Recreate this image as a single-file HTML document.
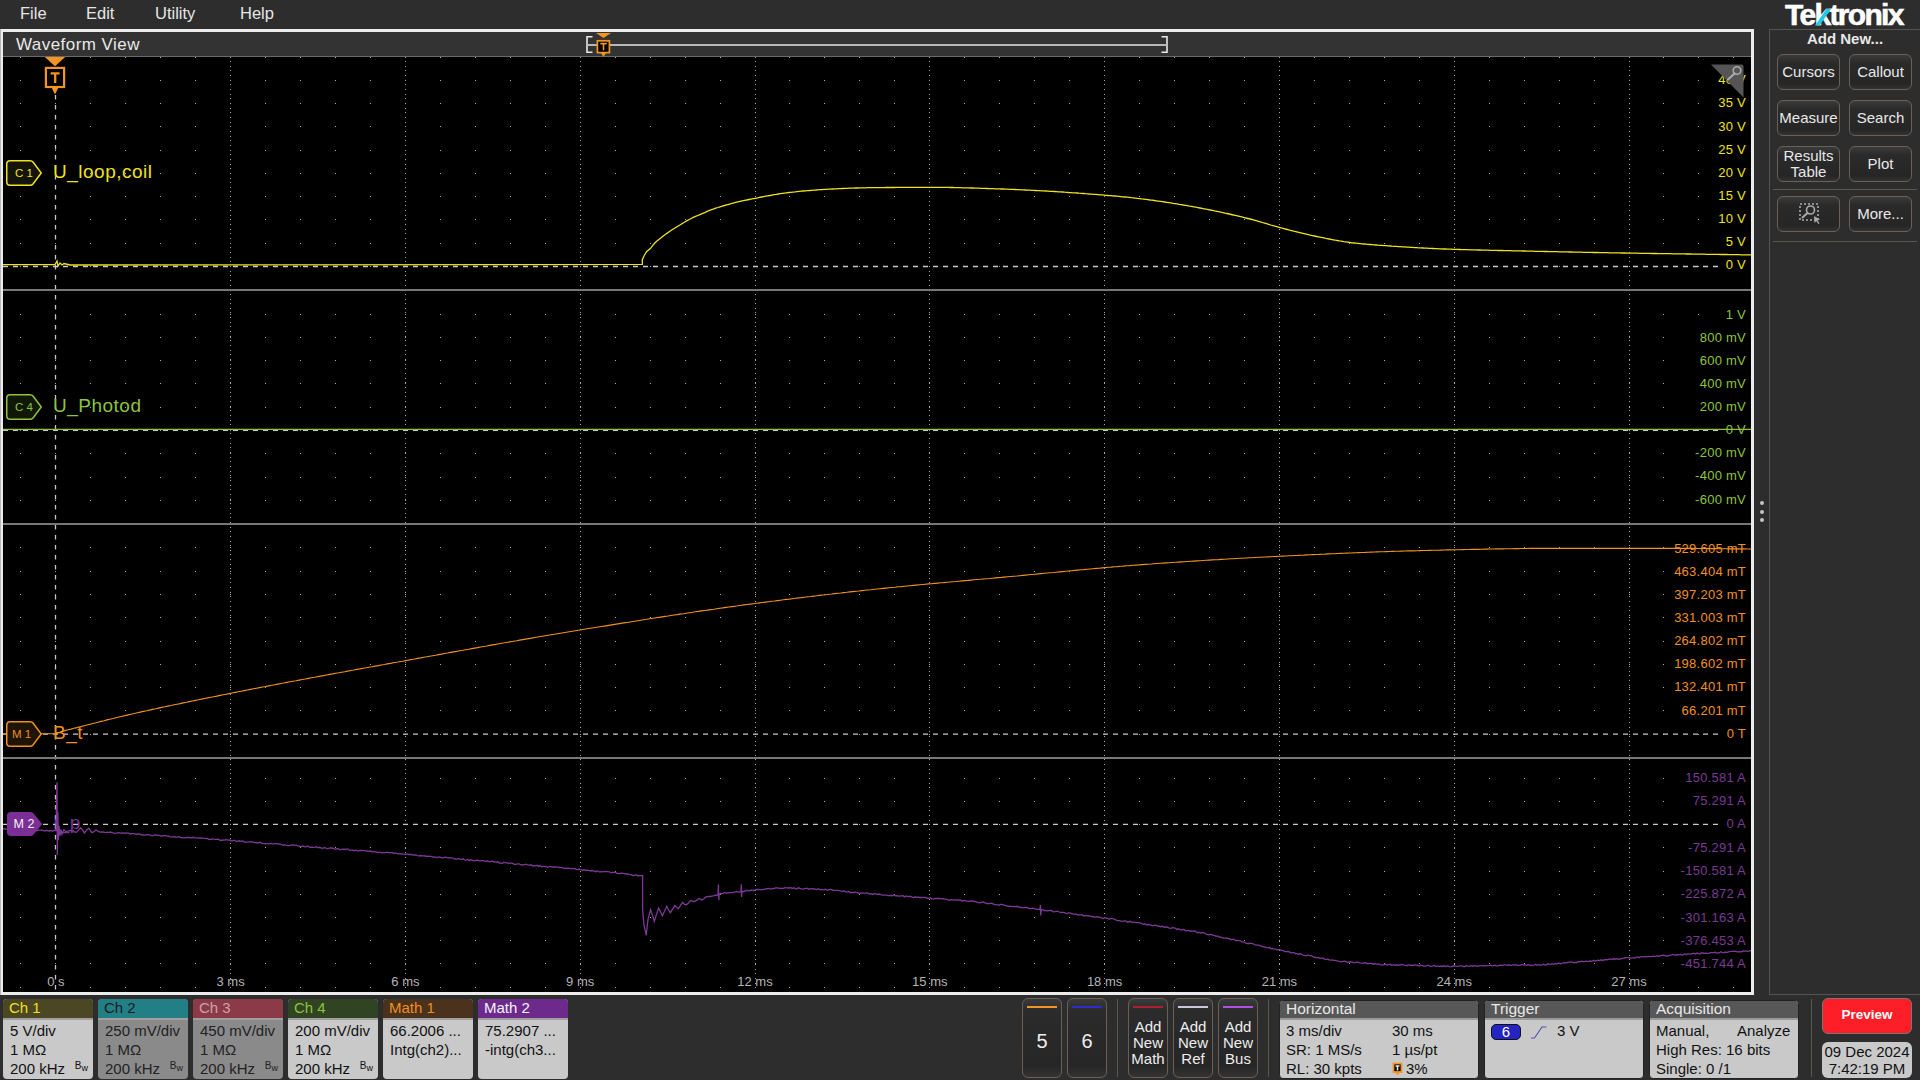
<!DOCTYPE html>
<html><head><meta charset="utf-8">
<style>
*{margin:0;padding:0;box-sizing:border-box}
html,body{width:1920px;height:1080px;overflow:hidden;background:#2d2d2d;font-family:"Liberation Sans", sans-serif;}
.abs{position:absolute}
.menu{position:absolute;top:4px;font-size:16.5px;color:#e6e6e6}
#frame{position:absolute;left:0;top:29px;width:1754px;height:966px;background:#ececec;border-left:1px solid #b8b8b8}
#title{position:absolute;left:3px;top:32px;width:1748px;height:25px;background:#333;border-bottom:1px solid #6a6a6a}
#plot{position:absolute;left:3px;top:57px;width:1748px;height:935px;background:#000;overflow:hidden}
svg{position:absolute;left:0;top:0}
.vl{position:absolute;right:5px;text-align:right;font-size:13px;letter-spacing:0.25px;line-height:16px;white-space:nowrap;background:#000;padding-left:4px}
.tl{position:absolute;top:917px;width:80px;text-align:center;font-size:13px;color:#b4b4b4;line-height:16px}
.btn{position:absolute;width:63px;height:36px;border:1px solid #6a6058;border-radius:6px;background:linear-gradient(#3a3a3a,#2a2a2a 25%,#262626 85%,#333);color:#e8e8e8;font-size:15px;text-align:center;display:flex;align-items:center;justify-content:center;line-height:16px}
.cbox{position:absolute;top:999px;width:90px;height:80px;border-radius:4px;overflow:hidden;background:#c9c9c9}
.cbox .h{height:21px;font-size:15px;line-height:18px;padding-left:6px;border-bottom:2px solid #a0a0a0}
.cbox .b{font-size:15px;line-height:19.2px;padding-left:7px;color:#111;padding-top:1px}
.bw{position:absolute;right:5px;bottom:6px;font-size:10px;color:#111;line-height:10px}
.vbtn{position:absolute;top:998px;width:40px;height:80px;border:1px solid #6a6058;border-radius:6px;background:linear-gradient(#3a3a3a,#2b2b2b 15%,#262626 85%,#333);color:#eee;text-align:center}
.vbtn .bar{position:absolute;left:4px;right:4px;top:7px;height:2px}
.sbox{position:absolute;top:1000px;height:79px;border-radius:4px;overflow:hidden;background:#c9c9c9;border:1px solid #222}
.sbox .h{height:19px;background:#575757;color:#e8e8e8;font-size:15.5px;line-height:15px;padding-left:6px;border-bottom:2px solid #9a9a9a}
.sbox .r{position:absolute;font-size:15px;color:#111;line-height:19px;white-space:nowrap}
</style></head><body>
<div class="menu" style="left:20px">File</div>
<div class="menu" style="left:86px">Edit</div>
<div class="menu" style="left:155px">Utility</div>
<div class="menu" style="left:240px">Help</div>

<div id="frame"></div>
<div id="title"><div class="abs" style="left:13px;top:3px;font-size:17px;letter-spacing:0.45px;color:#e8e8e8;line-height:20px">Waveform View</div></div>
<svg width="1920" height="80" style="left:0;top:0">
 <path d="M592.5 36.8H587V52.2H592.5" stroke="#e8e8e8" stroke-width="1.6" fill="none"/>
 <path d="M1161.5 36.8H1167V52.2H1161.5" stroke="#e8e8e8" stroke-width="1.6" fill="none"/>
 <rect x="587" y="44" width="580" height="2" fill="#b8b8b8"/>
 <path d="M596 33h15l-7.5 5z" fill="#f39423"/>
 <rect x="597.4" y="40.8" width="12" height="11.8" fill="#000" stroke="#f39423" stroke-width="1.7"/>
 <path d="M600.5 52.5l3 4.2l3-4.2z" fill="#f39423"/>
 <path d="M600.3 43.6h6.4M603.5 43.6v6.6" stroke="#f39423" stroke-width="1.6"/>
</svg>
<div id="plot">
<svg width="1748" height="935" viewBox="3 57 1748 935">
<path d="M20 57h1v1h-1zM55 57h1v1h-1zM90 57h1v1h-1zM125 57h1v1h-1zM160 57h1v1h-1zM195 57h1v1h-1zM230 57h1v1h-1zM265 57h1v1h-1zM300 57h1v1h-1zM335 57h1v1h-1zM370 57h1v1h-1zM405 57h1v1h-1zM440 57h1v1h-1zM475 57h1v1h-1zM510 57h1v1h-1zM545 57h1v1h-1zM580 57h1v1h-1zM615 57h1v1h-1zM650 57h1v1h-1zM685 57h1v1h-1zM720 57h1v1h-1zM755 57h1v1h-1zM789 57h1v1h-1zM824 57h1v1h-1zM859 57h1v1h-1zM894 57h1v1h-1zM929 57h1v1h-1zM964 57h1v1h-1zM999 57h1v1h-1zM1034 57h1v1h-1zM1069 57h1v1h-1zM1104 57h1v1h-1zM1139 57h1v1h-1zM1174 57h1v1h-1zM1209 57h1v1h-1zM1244 57h1v1h-1zM1279 57h1v1h-1zM1314 57h1v1h-1zM1349 57h1v1h-1zM1384 57h1v1h-1zM1419 57h1v1h-1zM1454 57h1v1h-1zM1489 57h1v1h-1zM1524 57h1v1h-1zM1559 57h1v1h-1zM1594 57h1v1h-1zM1629 57h1v1h-1zM1663 57h1v1h-1zM1698 57h1v1h-1zM1733 57h1v1h-1zM20 80h1v1h-1zM55 80h1v1h-1zM90 80h1v1h-1zM125 80h1v1h-1zM160 80h1v1h-1zM195 80h1v1h-1zM230 80h1v1h-1zM265 80h1v1h-1zM300 80h1v1h-1zM335 80h1v1h-1zM370 80h1v1h-1zM405 80h1v1h-1zM440 80h1v1h-1zM475 80h1v1h-1zM510 80h1v1h-1zM545 80h1v1h-1zM580 80h1v1h-1zM615 80h1v1h-1zM650 80h1v1h-1zM685 80h1v1h-1zM720 80h1v1h-1zM755 80h1v1h-1zM789 80h1v1h-1zM824 80h1v1h-1zM859 80h1v1h-1zM894 80h1v1h-1zM929 80h1v1h-1zM964 80h1v1h-1zM999 80h1v1h-1zM1034 80h1v1h-1zM1069 80h1v1h-1zM1104 80h1v1h-1zM1139 80h1v1h-1zM1174 80h1v1h-1zM1209 80h1v1h-1zM1244 80h1v1h-1zM1279 80h1v1h-1zM1314 80h1v1h-1zM1349 80h1v1h-1zM1384 80h1v1h-1zM1419 80h1v1h-1zM1454 80h1v1h-1zM1489 80h1v1h-1zM1524 80h1v1h-1zM1559 80h1v1h-1zM1594 80h1v1h-1zM1629 80h1v1h-1zM1663 80h1v1h-1zM1698 80h1v1h-1zM1733 80h1v1h-1zM20 103h1v1h-1zM55 103h1v1h-1zM90 103h1v1h-1zM125 103h1v1h-1zM160 103h1v1h-1zM195 103h1v1h-1zM230 103h1v1h-1zM265 103h1v1h-1zM300 103h1v1h-1zM335 103h1v1h-1zM370 103h1v1h-1zM405 103h1v1h-1zM440 103h1v1h-1zM475 103h1v1h-1zM510 103h1v1h-1zM545 103h1v1h-1zM580 103h1v1h-1zM615 103h1v1h-1zM650 103h1v1h-1zM685 103h1v1h-1zM720 103h1v1h-1zM755 103h1v1h-1zM789 103h1v1h-1zM824 103h1v1h-1zM859 103h1v1h-1zM894 103h1v1h-1zM929 103h1v1h-1zM964 103h1v1h-1zM999 103h1v1h-1zM1034 103h1v1h-1zM1069 103h1v1h-1zM1104 103h1v1h-1zM1139 103h1v1h-1zM1174 103h1v1h-1zM1209 103h1v1h-1zM1244 103h1v1h-1zM1279 103h1v1h-1zM1314 103h1v1h-1zM1349 103h1v1h-1zM1384 103h1v1h-1zM1419 103h1v1h-1zM1454 103h1v1h-1zM1489 103h1v1h-1zM1524 103h1v1h-1zM1559 103h1v1h-1zM1594 103h1v1h-1zM1629 103h1v1h-1zM1663 103h1v1h-1zM1698 103h1v1h-1zM1733 103h1v1h-1zM20 126h1v1h-1zM55 126h1v1h-1zM90 126h1v1h-1zM125 126h1v1h-1zM160 126h1v1h-1zM195 126h1v1h-1zM230 126h1v1h-1zM265 126h1v1h-1zM300 126h1v1h-1zM335 126h1v1h-1zM370 126h1v1h-1zM405 126h1v1h-1zM440 126h1v1h-1zM475 126h1v1h-1zM510 126h1v1h-1zM545 126h1v1h-1zM580 126h1v1h-1zM615 126h1v1h-1zM650 126h1v1h-1zM685 126h1v1h-1zM720 126h1v1h-1zM755 126h1v1h-1zM789 126h1v1h-1zM824 126h1v1h-1zM859 126h1v1h-1zM894 126h1v1h-1zM929 126h1v1h-1zM964 126h1v1h-1zM999 126h1v1h-1zM1034 126h1v1h-1zM1069 126h1v1h-1zM1104 126h1v1h-1zM1139 126h1v1h-1zM1174 126h1v1h-1zM1209 126h1v1h-1zM1244 126h1v1h-1zM1279 126h1v1h-1zM1314 126h1v1h-1zM1349 126h1v1h-1zM1384 126h1v1h-1zM1419 126h1v1h-1zM1454 126h1v1h-1zM1489 126h1v1h-1zM1524 126h1v1h-1zM1559 126h1v1h-1zM1594 126h1v1h-1zM1629 126h1v1h-1zM1663 126h1v1h-1zM1698 126h1v1h-1zM1733 126h1v1h-1zM20 150h1v1h-1zM55 150h1v1h-1zM90 150h1v1h-1zM125 150h1v1h-1zM160 150h1v1h-1zM195 150h1v1h-1zM230 150h1v1h-1zM265 150h1v1h-1zM300 150h1v1h-1zM335 150h1v1h-1zM370 150h1v1h-1zM405 150h1v1h-1zM440 150h1v1h-1zM475 150h1v1h-1zM510 150h1v1h-1zM545 150h1v1h-1zM580 150h1v1h-1zM615 150h1v1h-1zM650 150h1v1h-1zM685 150h1v1h-1zM720 150h1v1h-1zM755 150h1v1h-1zM789 150h1v1h-1zM824 150h1v1h-1zM859 150h1v1h-1zM894 150h1v1h-1zM929 150h1v1h-1zM964 150h1v1h-1zM999 150h1v1h-1zM1034 150h1v1h-1zM1069 150h1v1h-1zM1104 150h1v1h-1zM1139 150h1v1h-1zM1174 150h1v1h-1zM1209 150h1v1h-1zM1244 150h1v1h-1zM1279 150h1v1h-1zM1314 150h1v1h-1zM1349 150h1v1h-1zM1384 150h1v1h-1zM1419 150h1v1h-1zM1454 150h1v1h-1zM1489 150h1v1h-1zM1524 150h1v1h-1zM1559 150h1v1h-1zM1594 150h1v1h-1zM1629 150h1v1h-1zM1663 150h1v1h-1zM1698 150h1v1h-1zM1733 150h1v1h-1zM20 173h1v1h-1zM55 173h1v1h-1zM90 173h1v1h-1zM125 173h1v1h-1zM160 173h1v1h-1zM195 173h1v1h-1zM230 173h1v1h-1zM265 173h1v1h-1zM300 173h1v1h-1zM335 173h1v1h-1zM370 173h1v1h-1zM405 173h1v1h-1zM440 173h1v1h-1zM475 173h1v1h-1zM510 173h1v1h-1zM545 173h1v1h-1zM580 173h1v1h-1zM615 173h1v1h-1zM650 173h1v1h-1zM685 173h1v1h-1zM720 173h1v1h-1zM755 173h1v1h-1zM789 173h1v1h-1zM824 173h1v1h-1zM859 173h1v1h-1zM894 173h1v1h-1zM929 173h1v1h-1zM964 173h1v1h-1zM999 173h1v1h-1zM1034 173h1v1h-1zM1069 173h1v1h-1zM1104 173h1v1h-1zM1139 173h1v1h-1zM1174 173h1v1h-1zM1209 173h1v1h-1zM1244 173h1v1h-1zM1279 173h1v1h-1zM1314 173h1v1h-1zM1349 173h1v1h-1zM1384 173h1v1h-1zM1419 173h1v1h-1zM1454 173h1v1h-1zM1489 173h1v1h-1zM1524 173h1v1h-1zM1559 173h1v1h-1zM1594 173h1v1h-1zM1629 173h1v1h-1zM1663 173h1v1h-1zM1698 173h1v1h-1zM1733 173h1v1h-1zM20 196h1v1h-1zM55 196h1v1h-1zM90 196h1v1h-1zM125 196h1v1h-1zM160 196h1v1h-1zM195 196h1v1h-1zM230 196h1v1h-1zM265 196h1v1h-1zM300 196h1v1h-1zM335 196h1v1h-1zM370 196h1v1h-1zM405 196h1v1h-1zM440 196h1v1h-1zM475 196h1v1h-1zM510 196h1v1h-1zM545 196h1v1h-1zM580 196h1v1h-1zM615 196h1v1h-1zM650 196h1v1h-1zM685 196h1v1h-1zM720 196h1v1h-1zM755 196h1v1h-1zM789 196h1v1h-1zM824 196h1v1h-1zM859 196h1v1h-1zM894 196h1v1h-1zM929 196h1v1h-1zM964 196h1v1h-1zM999 196h1v1h-1zM1034 196h1v1h-1zM1069 196h1v1h-1zM1104 196h1v1h-1zM1139 196h1v1h-1zM1174 196h1v1h-1zM1209 196h1v1h-1zM1244 196h1v1h-1zM1279 196h1v1h-1zM1314 196h1v1h-1zM1349 196h1v1h-1zM1384 196h1v1h-1zM1419 196h1v1h-1zM1454 196h1v1h-1zM1489 196h1v1h-1zM1524 196h1v1h-1zM1559 196h1v1h-1zM1594 196h1v1h-1zM1629 196h1v1h-1zM1663 196h1v1h-1zM1698 196h1v1h-1zM1733 196h1v1h-1zM20 219h1v1h-1zM55 219h1v1h-1zM90 219h1v1h-1zM125 219h1v1h-1zM160 219h1v1h-1zM195 219h1v1h-1zM230 219h1v1h-1zM265 219h1v1h-1zM300 219h1v1h-1zM335 219h1v1h-1zM370 219h1v1h-1zM405 219h1v1h-1zM440 219h1v1h-1zM475 219h1v1h-1zM510 219h1v1h-1zM545 219h1v1h-1zM580 219h1v1h-1zM615 219h1v1h-1zM650 219h1v1h-1zM685 219h1v1h-1zM720 219h1v1h-1zM755 219h1v1h-1zM789 219h1v1h-1zM824 219h1v1h-1zM859 219h1v1h-1zM894 219h1v1h-1zM929 219h1v1h-1zM964 219h1v1h-1zM999 219h1v1h-1zM1034 219h1v1h-1zM1069 219h1v1h-1zM1104 219h1v1h-1zM1139 219h1v1h-1zM1174 219h1v1h-1zM1209 219h1v1h-1zM1244 219h1v1h-1zM1279 219h1v1h-1zM1314 219h1v1h-1zM1349 219h1v1h-1zM1384 219h1v1h-1zM1419 219h1v1h-1zM1454 219h1v1h-1zM1489 219h1v1h-1zM1524 219h1v1h-1zM1559 219h1v1h-1zM1594 219h1v1h-1zM1629 219h1v1h-1zM1663 219h1v1h-1zM1698 219h1v1h-1zM1733 219h1v1h-1zM20 243h1v1h-1zM55 243h1v1h-1zM90 243h1v1h-1zM125 243h1v1h-1zM160 243h1v1h-1zM195 243h1v1h-1zM230 243h1v1h-1zM265 243h1v1h-1zM300 243h1v1h-1zM335 243h1v1h-1zM370 243h1v1h-1zM405 243h1v1h-1zM440 243h1v1h-1zM475 243h1v1h-1zM510 243h1v1h-1zM545 243h1v1h-1zM580 243h1v1h-1zM615 243h1v1h-1zM650 243h1v1h-1zM685 243h1v1h-1zM720 243h1v1h-1zM755 243h1v1h-1zM789 243h1v1h-1zM824 243h1v1h-1zM859 243h1v1h-1zM894 243h1v1h-1zM929 243h1v1h-1zM964 243h1v1h-1zM999 243h1v1h-1zM1034 243h1v1h-1zM1069 243h1v1h-1zM1104 243h1v1h-1zM1139 243h1v1h-1zM1174 243h1v1h-1zM1209 243h1v1h-1zM1244 243h1v1h-1zM1279 243h1v1h-1zM1314 243h1v1h-1zM1349 243h1v1h-1zM1384 243h1v1h-1zM1419 243h1v1h-1zM1454 243h1v1h-1zM1489 243h1v1h-1zM1524 243h1v1h-1zM1559 243h1v1h-1zM1594 243h1v1h-1zM1629 243h1v1h-1zM1663 243h1v1h-1zM1698 243h1v1h-1zM1733 243h1v1h-1zM20 266h1v1h-1zM55 266h1v1h-1zM90 266h1v1h-1zM125 266h1v1h-1zM160 266h1v1h-1zM195 266h1v1h-1zM230 266h1v1h-1zM265 266h1v1h-1zM300 266h1v1h-1zM335 266h1v1h-1zM370 266h1v1h-1zM405 266h1v1h-1zM440 266h1v1h-1zM475 266h1v1h-1zM510 266h1v1h-1zM545 266h1v1h-1zM580 266h1v1h-1zM615 266h1v1h-1zM650 266h1v1h-1zM685 266h1v1h-1zM720 266h1v1h-1zM755 266h1v1h-1zM789 266h1v1h-1zM824 266h1v1h-1zM859 266h1v1h-1zM894 266h1v1h-1zM929 266h1v1h-1zM964 266h1v1h-1zM999 266h1v1h-1zM1034 266h1v1h-1zM1069 266h1v1h-1zM1104 266h1v1h-1zM1139 266h1v1h-1zM1174 266h1v1h-1zM1209 266h1v1h-1zM1244 266h1v1h-1zM1279 266h1v1h-1zM1314 266h1v1h-1zM1349 266h1v1h-1zM1384 266h1v1h-1zM1419 266h1v1h-1zM1454 266h1v1h-1zM1489 266h1v1h-1zM1524 266h1v1h-1zM1559 266h1v1h-1zM1594 266h1v1h-1zM1629 266h1v1h-1zM1663 266h1v1h-1zM1698 266h1v1h-1zM1733 266h1v1h-1zM20 290h1v1h-1zM55 290h1v1h-1zM90 290h1v1h-1zM125 290h1v1h-1zM160 290h1v1h-1zM195 290h1v1h-1zM230 290h1v1h-1zM265 290h1v1h-1zM300 290h1v1h-1zM335 290h1v1h-1zM370 290h1v1h-1zM405 290h1v1h-1zM440 290h1v1h-1zM475 290h1v1h-1zM510 290h1v1h-1zM545 290h1v1h-1zM580 290h1v1h-1zM615 290h1v1h-1zM650 290h1v1h-1zM685 290h1v1h-1zM720 290h1v1h-1zM755 290h1v1h-1zM789 290h1v1h-1zM824 290h1v1h-1zM859 290h1v1h-1zM894 290h1v1h-1zM929 290h1v1h-1zM964 290h1v1h-1zM999 290h1v1h-1zM1034 290h1v1h-1zM1069 290h1v1h-1zM1104 290h1v1h-1zM1139 290h1v1h-1zM1174 290h1v1h-1zM1209 290h1v1h-1zM1244 290h1v1h-1zM1279 290h1v1h-1zM1314 290h1v1h-1zM1349 290h1v1h-1zM1384 290h1v1h-1zM1419 290h1v1h-1zM1454 290h1v1h-1zM1489 290h1v1h-1zM1524 290h1v1h-1zM1559 290h1v1h-1zM1594 290h1v1h-1zM1629 290h1v1h-1zM1663 290h1v1h-1zM1698 290h1v1h-1zM1733 290h1v1h-1zM20 314h1v1h-1zM55 314h1v1h-1zM90 314h1v1h-1zM125 314h1v1h-1zM160 314h1v1h-1zM195 314h1v1h-1zM230 314h1v1h-1zM265 314h1v1h-1zM300 314h1v1h-1zM335 314h1v1h-1zM370 314h1v1h-1zM405 314h1v1h-1zM440 314h1v1h-1zM475 314h1v1h-1zM510 314h1v1h-1zM545 314h1v1h-1zM580 314h1v1h-1zM615 314h1v1h-1zM650 314h1v1h-1zM685 314h1v1h-1zM720 314h1v1h-1zM755 314h1v1h-1zM789 314h1v1h-1zM824 314h1v1h-1zM859 314h1v1h-1zM894 314h1v1h-1zM929 314h1v1h-1zM964 314h1v1h-1zM999 314h1v1h-1zM1034 314h1v1h-1zM1069 314h1v1h-1zM1104 314h1v1h-1zM1139 314h1v1h-1zM1174 314h1v1h-1zM1209 314h1v1h-1zM1244 314h1v1h-1zM1279 314h1v1h-1zM1314 314h1v1h-1zM1349 314h1v1h-1zM1384 314h1v1h-1zM1419 314h1v1h-1zM1454 314h1v1h-1zM1489 314h1v1h-1zM1524 314h1v1h-1zM1559 314h1v1h-1zM1594 314h1v1h-1zM1629 314h1v1h-1zM1663 314h1v1h-1zM1698 314h1v1h-1zM1733 314h1v1h-1zM20 337h1v1h-1zM55 337h1v1h-1zM90 337h1v1h-1zM125 337h1v1h-1zM160 337h1v1h-1zM195 337h1v1h-1zM230 337h1v1h-1zM265 337h1v1h-1zM300 337h1v1h-1zM335 337h1v1h-1zM370 337h1v1h-1zM405 337h1v1h-1zM440 337h1v1h-1zM475 337h1v1h-1zM510 337h1v1h-1zM545 337h1v1h-1zM580 337h1v1h-1zM615 337h1v1h-1zM650 337h1v1h-1zM685 337h1v1h-1zM720 337h1v1h-1zM755 337h1v1h-1zM789 337h1v1h-1zM824 337h1v1h-1zM859 337h1v1h-1zM894 337h1v1h-1zM929 337h1v1h-1zM964 337h1v1h-1zM999 337h1v1h-1zM1034 337h1v1h-1zM1069 337h1v1h-1zM1104 337h1v1h-1zM1139 337h1v1h-1zM1174 337h1v1h-1zM1209 337h1v1h-1zM1244 337h1v1h-1zM1279 337h1v1h-1zM1314 337h1v1h-1zM1349 337h1v1h-1zM1384 337h1v1h-1zM1419 337h1v1h-1zM1454 337h1v1h-1zM1489 337h1v1h-1zM1524 337h1v1h-1zM1559 337h1v1h-1zM1594 337h1v1h-1zM1629 337h1v1h-1zM1663 337h1v1h-1zM1698 337h1v1h-1zM1733 337h1v1h-1zM20 360h1v1h-1zM55 360h1v1h-1zM90 360h1v1h-1zM125 360h1v1h-1zM160 360h1v1h-1zM195 360h1v1h-1zM230 360h1v1h-1zM265 360h1v1h-1zM300 360h1v1h-1zM335 360h1v1h-1zM370 360h1v1h-1zM405 360h1v1h-1zM440 360h1v1h-1zM475 360h1v1h-1zM510 360h1v1h-1zM545 360h1v1h-1zM580 360h1v1h-1zM615 360h1v1h-1zM650 360h1v1h-1zM685 360h1v1h-1zM720 360h1v1h-1zM755 360h1v1h-1zM789 360h1v1h-1zM824 360h1v1h-1zM859 360h1v1h-1zM894 360h1v1h-1zM929 360h1v1h-1zM964 360h1v1h-1zM999 360h1v1h-1zM1034 360h1v1h-1zM1069 360h1v1h-1zM1104 360h1v1h-1zM1139 360h1v1h-1zM1174 360h1v1h-1zM1209 360h1v1h-1zM1244 360h1v1h-1zM1279 360h1v1h-1zM1314 360h1v1h-1zM1349 360h1v1h-1zM1384 360h1v1h-1zM1419 360h1v1h-1zM1454 360h1v1h-1zM1489 360h1v1h-1zM1524 360h1v1h-1zM1559 360h1v1h-1zM1594 360h1v1h-1zM1629 360h1v1h-1zM1663 360h1v1h-1zM1698 360h1v1h-1zM1733 360h1v1h-1zM20 383h1v1h-1zM55 383h1v1h-1zM90 383h1v1h-1zM125 383h1v1h-1zM160 383h1v1h-1zM195 383h1v1h-1zM230 383h1v1h-1zM265 383h1v1h-1zM300 383h1v1h-1zM335 383h1v1h-1zM370 383h1v1h-1zM405 383h1v1h-1zM440 383h1v1h-1zM475 383h1v1h-1zM510 383h1v1h-1zM545 383h1v1h-1zM580 383h1v1h-1zM615 383h1v1h-1zM650 383h1v1h-1zM685 383h1v1h-1zM720 383h1v1h-1zM755 383h1v1h-1zM789 383h1v1h-1zM824 383h1v1h-1zM859 383h1v1h-1zM894 383h1v1h-1zM929 383h1v1h-1zM964 383h1v1h-1zM999 383h1v1h-1zM1034 383h1v1h-1zM1069 383h1v1h-1zM1104 383h1v1h-1zM1139 383h1v1h-1zM1174 383h1v1h-1zM1209 383h1v1h-1zM1244 383h1v1h-1zM1279 383h1v1h-1zM1314 383h1v1h-1zM1349 383h1v1h-1zM1384 383h1v1h-1zM1419 383h1v1h-1zM1454 383h1v1h-1zM1489 383h1v1h-1zM1524 383h1v1h-1zM1559 383h1v1h-1zM1594 383h1v1h-1zM1629 383h1v1h-1zM1663 383h1v1h-1zM1698 383h1v1h-1zM1733 383h1v1h-1zM20 407h1v1h-1zM55 407h1v1h-1zM90 407h1v1h-1zM125 407h1v1h-1zM160 407h1v1h-1zM195 407h1v1h-1zM230 407h1v1h-1zM265 407h1v1h-1zM300 407h1v1h-1zM335 407h1v1h-1zM370 407h1v1h-1zM405 407h1v1h-1zM440 407h1v1h-1zM475 407h1v1h-1zM510 407h1v1h-1zM545 407h1v1h-1zM580 407h1v1h-1zM615 407h1v1h-1zM650 407h1v1h-1zM685 407h1v1h-1zM720 407h1v1h-1zM755 407h1v1h-1zM789 407h1v1h-1zM824 407h1v1h-1zM859 407h1v1h-1zM894 407h1v1h-1zM929 407h1v1h-1zM964 407h1v1h-1zM999 407h1v1h-1zM1034 407h1v1h-1zM1069 407h1v1h-1zM1104 407h1v1h-1zM1139 407h1v1h-1zM1174 407h1v1h-1zM1209 407h1v1h-1zM1244 407h1v1h-1zM1279 407h1v1h-1zM1314 407h1v1h-1zM1349 407h1v1h-1zM1384 407h1v1h-1zM1419 407h1v1h-1zM1454 407h1v1h-1zM1489 407h1v1h-1zM1524 407h1v1h-1zM1559 407h1v1h-1zM1594 407h1v1h-1zM1629 407h1v1h-1zM1663 407h1v1h-1zM1698 407h1v1h-1zM1733 407h1v1h-1zM20 430h1v1h-1zM55 430h1v1h-1zM90 430h1v1h-1zM125 430h1v1h-1zM160 430h1v1h-1zM195 430h1v1h-1zM230 430h1v1h-1zM265 430h1v1h-1zM300 430h1v1h-1zM335 430h1v1h-1zM370 430h1v1h-1zM405 430h1v1h-1zM440 430h1v1h-1zM475 430h1v1h-1zM510 430h1v1h-1zM545 430h1v1h-1zM580 430h1v1h-1zM615 430h1v1h-1zM650 430h1v1h-1zM685 430h1v1h-1zM720 430h1v1h-1zM755 430h1v1h-1zM789 430h1v1h-1zM824 430h1v1h-1zM859 430h1v1h-1zM894 430h1v1h-1zM929 430h1v1h-1zM964 430h1v1h-1zM999 430h1v1h-1zM1034 430h1v1h-1zM1069 430h1v1h-1zM1104 430h1v1h-1zM1139 430h1v1h-1zM1174 430h1v1h-1zM1209 430h1v1h-1zM1244 430h1v1h-1zM1279 430h1v1h-1zM1314 430h1v1h-1zM1349 430h1v1h-1zM1384 430h1v1h-1zM1419 430h1v1h-1zM1454 430h1v1h-1zM1489 430h1v1h-1zM1524 430h1v1h-1zM1559 430h1v1h-1zM1594 430h1v1h-1zM1629 430h1v1h-1zM1663 430h1v1h-1zM1698 430h1v1h-1zM1733 430h1v1h-1zM20 453h1v1h-1zM55 453h1v1h-1zM90 453h1v1h-1zM125 453h1v1h-1zM160 453h1v1h-1zM195 453h1v1h-1zM230 453h1v1h-1zM265 453h1v1h-1zM300 453h1v1h-1zM335 453h1v1h-1zM370 453h1v1h-1zM405 453h1v1h-1zM440 453h1v1h-1zM475 453h1v1h-1zM510 453h1v1h-1zM545 453h1v1h-1zM580 453h1v1h-1zM615 453h1v1h-1zM650 453h1v1h-1zM685 453h1v1h-1zM720 453h1v1h-1zM755 453h1v1h-1zM789 453h1v1h-1zM824 453h1v1h-1zM859 453h1v1h-1zM894 453h1v1h-1zM929 453h1v1h-1zM964 453h1v1h-1zM999 453h1v1h-1zM1034 453h1v1h-1zM1069 453h1v1h-1zM1104 453h1v1h-1zM1139 453h1v1h-1zM1174 453h1v1h-1zM1209 453h1v1h-1zM1244 453h1v1h-1zM1279 453h1v1h-1zM1314 453h1v1h-1zM1349 453h1v1h-1zM1384 453h1v1h-1zM1419 453h1v1h-1zM1454 453h1v1h-1zM1489 453h1v1h-1zM1524 453h1v1h-1zM1559 453h1v1h-1zM1594 453h1v1h-1zM1629 453h1v1h-1zM1663 453h1v1h-1zM1698 453h1v1h-1zM1733 453h1v1h-1zM20 477h1v1h-1zM55 477h1v1h-1zM90 477h1v1h-1zM125 477h1v1h-1zM160 477h1v1h-1zM195 477h1v1h-1zM230 477h1v1h-1zM265 477h1v1h-1zM300 477h1v1h-1zM335 477h1v1h-1zM370 477h1v1h-1zM405 477h1v1h-1zM440 477h1v1h-1zM475 477h1v1h-1zM510 477h1v1h-1zM545 477h1v1h-1zM580 477h1v1h-1zM615 477h1v1h-1zM650 477h1v1h-1zM685 477h1v1h-1zM720 477h1v1h-1zM755 477h1v1h-1zM789 477h1v1h-1zM824 477h1v1h-1zM859 477h1v1h-1zM894 477h1v1h-1zM929 477h1v1h-1zM964 477h1v1h-1zM999 477h1v1h-1zM1034 477h1v1h-1zM1069 477h1v1h-1zM1104 477h1v1h-1zM1139 477h1v1h-1zM1174 477h1v1h-1zM1209 477h1v1h-1zM1244 477h1v1h-1zM1279 477h1v1h-1zM1314 477h1v1h-1zM1349 477h1v1h-1zM1384 477h1v1h-1zM1419 477h1v1h-1zM1454 477h1v1h-1zM1489 477h1v1h-1zM1524 477h1v1h-1zM1559 477h1v1h-1zM1594 477h1v1h-1zM1629 477h1v1h-1zM1663 477h1v1h-1zM1698 477h1v1h-1zM1733 477h1v1h-1zM20 500h1v1h-1zM55 500h1v1h-1zM90 500h1v1h-1zM125 500h1v1h-1zM160 500h1v1h-1zM195 500h1v1h-1zM230 500h1v1h-1zM265 500h1v1h-1zM300 500h1v1h-1zM335 500h1v1h-1zM370 500h1v1h-1zM405 500h1v1h-1zM440 500h1v1h-1zM475 500h1v1h-1zM510 500h1v1h-1zM545 500h1v1h-1zM580 500h1v1h-1zM615 500h1v1h-1zM650 500h1v1h-1zM685 500h1v1h-1zM720 500h1v1h-1zM755 500h1v1h-1zM789 500h1v1h-1zM824 500h1v1h-1zM859 500h1v1h-1zM894 500h1v1h-1zM929 500h1v1h-1zM964 500h1v1h-1zM999 500h1v1h-1zM1034 500h1v1h-1zM1069 500h1v1h-1zM1104 500h1v1h-1zM1139 500h1v1h-1zM1174 500h1v1h-1zM1209 500h1v1h-1zM1244 500h1v1h-1zM1279 500h1v1h-1zM1314 500h1v1h-1zM1349 500h1v1h-1zM1384 500h1v1h-1zM1419 500h1v1h-1zM1454 500h1v1h-1zM1489 500h1v1h-1zM1524 500h1v1h-1zM1559 500h1v1h-1zM1594 500h1v1h-1zM1629 500h1v1h-1zM1663 500h1v1h-1zM1698 500h1v1h-1zM1733 500h1v1h-1zM20 524h1v1h-1zM55 524h1v1h-1zM90 524h1v1h-1zM125 524h1v1h-1zM160 524h1v1h-1zM195 524h1v1h-1zM230 524h1v1h-1zM265 524h1v1h-1zM300 524h1v1h-1zM335 524h1v1h-1zM370 524h1v1h-1zM405 524h1v1h-1zM440 524h1v1h-1zM475 524h1v1h-1zM510 524h1v1h-1zM545 524h1v1h-1zM580 524h1v1h-1zM615 524h1v1h-1zM650 524h1v1h-1zM685 524h1v1h-1zM720 524h1v1h-1zM755 524h1v1h-1zM789 524h1v1h-1zM824 524h1v1h-1zM859 524h1v1h-1zM894 524h1v1h-1zM929 524h1v1h-1zM964 524h1v1h-1zM999 524h1v1h-1zM1034 524h1v1h-1zM1069 524h1v1h-1zM1104 524h1v1h-1zM1139 524h1v1h-1zM1174 524h1v1h-1zM1209 524h1v1h-1zM1244 524h1v1h-1zM1279 524h1v1h-1zM1314 524h1v1h-1zM1349 524h1v1h-1zM1384 524h1v1h-1zM1419 524h1v1h-1zM1454 524h1v1h-1zM1489 524h1v1h-1zM1524 524h1v1h-1zM1559 524h1v1h-1zM1594 524h1v1h-1zM1629 524h1v1h-1zM1663 524h1v1h-1zM1698 524h1v1h-1zM1733 524h1v1h-1zM20 547h1v1h-1zM55 547h1v1h-1zM90 547h1v1h-1zM125 547h1v1h-1zM160 547h1v1h-1zM195 547h1v1h-1zM230 547h1v1h-1zM265 547h1v1h-1zM300 547h1v1h-1zM335 547h1v1h-1zM370 547h1v1h-1zM405 547h1v1h-1zM440 547h1v1h-1zM475 547h1v1h-1zM510 547h1v1h-1zM545 547h1v1h-1zM580 547h1v1h-1zM615 547h1v1h-1zM650 547h1v1h-1zM685 547h1v1h-1zM720 547h1v1h-1zM755 547h1v1h-1zM789 547h1v1h-1zM824 547h1v1h-1zM859 547h1v1h-1zM894 547h1v1h-1zM929 547h1v1h-1zM964 547h1v1h-1zM999 547h1v1h-1zM1034 547h1v1h-1zM1069 547h1v1h-1zM1104 547h1v1h-1zM1139 547h1v1h-1zM1174 547h1v1h-1zM1209 547h1v1h-1zM1244 547h1v1h-1zM1279 547h1v1h-1zM1314 547h1v1h-1zM1349 547h1v1h-1zM1384 547h1v1h-1zM1419 547h1v1h-1zM1454 547h1v1h-1zM1489 547h1v1h-1zM1524 547h1v1h-1zM1559 547h1v1h-1zM1594 547h1v1h-1zM1629 547h1v1h-1zM1663 547h1v1h-1zM1698 547h1v1h-1zM1733 547h1v1h-1zM20 571h1v1h-1zM55 571h1v1h-1zM90 571h1v1h-1zM125 571h1v1h-1zM160 571h1v1h-1zM195 571h1v1h-1zM230 571h1v1h-1zM265 571h1v1h-1zM300 571h1v1h-1zM335 571h1v1h-1zM370 571h1v1h-1zM405 571h1v1h-1zM440 571h1v1h-1zM475 571h1v1h-1zM510 571h1v1h-1zM545 571h1v1h-1zM580 571h1v1h-1zM615 571h1v1h-1zM650 571h1v1h-1zM685 571h1v1h-1zM720 571h1v1h-1zM755 571h1v1h-1zM789 571h1v1h-1zM824 571h1v1h-1zM859 571h1v1h-1zM894 571h1v1h-1zM929 571h1v1h-1zM964 571h1v1h-1zM999 571h1v1h-1zM1034 571h1v1h-1zM1069 571h1v1h-1zM1104 571h1v1h-1zM1139 571h1v1h-1zM1174 571h1v1h-1zM1209 571h1v1h-1zM1244 571h1v1h-1zM1279 571h1v1h-1zM1314 571h1v1h-1zM1349 571h1v1h-1zM1384 571h1v1h-1zM1419 571h1v1h-1zM1454 571h1v1h-1zM1489 571h1v1h-1zM1524 571h1v1h-1zM1559 571h1v1h-1zM1594 571h1v1h-1zM1629 571h1v1h-1zM1663 571h1v1h-1zM1698 571h1v1h-1zM1733 571h1v1h-1zM20 594h1v1h-1zM55 594h1v1h-1zM90 594h1v1h-1zM125 594h1v1h-1zM160 594h1v1h-1zM195 594h1v1h-1zM230 594h1v1h-1zM265 594h1v1h-1zM300 594h1v1h-1zM335 594h1v1h-1zM370 594h1v1h-1zM405 594h1v1h-1zM440 594h1v1h-1zM475 594h1v1h-1zM510 594h1v1h-1zM545 594h1v1h-1zM580 594h1v1h-1zM615 594h1v1h-1zM650 594h1v1h-1zM685 594h1v1h-1zM720 594h1v1h-1zM755 594h1v1h-1zM789 594h1v1h-1zM824 594h1v1h-1zM859 594h1v1h-1zM894 594h1v1h-1zM929 594h1v1h-1zM964 594h1v1h-1zM999 594h1v1h-1zM1034 594h1v1h-1zM1069 594h1v1h-1zM1104 594h1v1h-1zM1139 594h1v1h-1zM1174 594h1v1h-1zM1209 594h1v1h-1zM1244 594h1v1h-1zM1279 594h1v1h-1zM1314 594h1v1h-1zM1349 594h1v1h-1zM1384 594h1v1h-1zM1419 594h1v1h-1zM1454 594h1v1h-1zM1489 594h1v1h-1zM1524 594h1v1h-1zM1559 594h1v1h-1zM1594 594h1v1h-1zM1629 594h1v1h-1zM1663 594h1v1h-1zM1698 594h1v1h-1zM1733 594h1v1h-1zM20 617h1v1h-1zM55 617h1v1h-1zM90 617h1v1h-1zM125 617h1v1h-1zM160 617h1v1h-1zM195 617h1v1h-1zM230 617h1v1h-1zM265 617h1v1h-1zM300 617h1v1h-1zM335 617h1v1h-1zM370 617h1v1h-1zM405 617h1v1h-1zM440 617h1v1h-1zM475 617h1v1h-1zM510 617h1v1h-1zM545 617h1v1h-1zM580 617h1v1h-1zM615 617h1v1h-1zM650 617h1v1h-1zM685 617h1v1h-1zM720 617h1v1h-1zM755 617h1v1h-1zM789 617h1v1h-1zM824 617h1v1h-1zM859 617h1v1h-1zM894 617h1v1h-1zM929 617h1v1h-1zM964 617h1v1h-1zM999 617h1v1h-1zM1034 617h1v1h-1zM1069 617h1v1h-1zM1104 617h1v1h-1zM1139 617h1v1h-1zM1174 617h1v1h-1zM1209 617h1v1h-1zM1244 617h1v1h-1zM1279 617h1v1h-1zM1314 617h1v1h-1zM1349 617h1v1h-1zM1384 617h1v1h-1zM1419 617h1v1h-1zM1454 617h1v1h-1zM1489 617h1v1h-1zM1524 617h1v1h-1zM1559 617h1v1h-1zM1594 617h1v1h-1zM1629 617h1v1h-1zM1663 617h1v1h-1zM1698 617h1v1h-1zM1733 617h1v1h-1zM20 641h1v1h-1zM55 641h1v1h-1zM90 641h1v1h-1zM125 641h1v1h-1zM160 641h1v1h-1zM195 641h1v1h-1zM230 641h1v1h-1zM265 641h1v1h-1zM300 641h1v1h-1zM335 641h1v1h-1zM370 641h1v1h-1zM405 641h1v1h-1zM440 641h1v1h-1zM475 641h1v1h-1zM510 641h1v1h-1zM545 641h1v1h-1zM580 641h1v1h-1zM615 641h1v1h-1zM650 641h1v1h-1zM685 641h1v1h-1zM720 641h1v1h-1zM755 641h1v1h-1zM789 641h1v1h-1zM824 641h1v1h-1zM859 641h1v1h-1zM894 641h1v1h-1zM929 641h1v1h-1zM964 641h1v1h-1zM999 641h1v1h-1zM1034 641h1v1h-1zM1069 641h1v1h-1zM1104 641h1v1h-1zM1139 641h1v1h-1zM1174 641h1v1h-1zM1209 641h1v1h-1zM1244 641h1v1h-1zM1279 641h1v1h-1zM1314 641h1v1h-1zM1349 641h1v1h-1zM1384 641h1v1h-1zM1419 641h1v1h-1zM1454 641h1v1h-1zM1489 641h1v1h-1zM1524 641h1v1h-1zM1559 641h1v1h-1zM1594 641h1v1h-1zM1629 641h1v1h-1zM1663 641h1v1h-1zM1698 641h1v1h-1zM1733 641h1v1h-1zM20 664h1v1h-1zM55 664h1v1h-1zM90 664h1v1h-1zM125 664h1v1h-1zM160 664h1v1h-1zM195 664h1v1h-1zM230 664h1v1h-1zM265 664h1v1h-1zM300 664h1v1h-1zM335 664h1v1h-1zM370 664h1v1h-1zM405 664h1v1h-1zM440 664h1v1h-1zM475 664h1v1h-1zM510 664h1v1h-1zM545 664h1v1h-1zM580 664h1v1h-1zM615 664h1v1h-1zM650 664h1v1h-1zM685 664h1v1h-1zM720 664h1v1h-1zM755 664h1v1h-1zM789 664h1v1h-1zM824 664h1v1h-1zM859 664h1v1h-1zM894 664h1v1h-1zM929 664h1v1h-1zM964 664h1v1h-1zM999 664h1v1h-1zM1034 664h1v1h-1zM1069 664h1v1h-1zM1104 664h1v1h-1zM1139 664h1v1h-1zM1174 664h1v1h-1zM1209 664h1v1h-1zM1244 664h1v1h-1zM1279 664h1v1h-1zM1314 664h1v1h-1zM1349 664h1v1h-1zM1384 664h1v1h-1zM1419 664h1v1h-1zM1454 664h1v1h-1zM1489 664h1v1h-1zM1524 664h1v1h-1zM1559 664h1v1h-1zM1594 664h1v1h-1zM1629 664h1v1h-1zM1663 664h1v1h-1zM1698 664h1v1h-1zM1733 664h1v1h-1zM20 687h1v1h-1zM55 687h1v1h-1zM90 687h1v1h-1zM125 687h1v1h-1zM160 687h1v1h-1zM195 687h1v1h-1zM230 687h1v1h-1zM265 687h1v1h-1zM300 687h1v1h-1zM335 687h1v1h-1zM370 687h1v1h-1zM405 687h1v1h-1zM440 687h1v1h-1zM475 687h1v1h-1zM510 687h1v1h-1zM545 687h1v1h-1zM580 687h1v1h-1zM615 687h1v1h-1zM650 687h1v1h-1zM685 687h1v1h-1zM720 687h1v1h-1zM755 687h1v1h-1zM789 687h1v1h-1zM824 687h1v1h-1zM859 687h1v1h-1zM894 687h1v1h-1zM929 687h1v1h-1zM964 687h1v1h-1zM999 687h1v1h-1zM1034 687h1v1h-1zM1069 687h1v1h-1zM1104 687h1v1h-1zM1139 687h1v1h-1zM1174 687h1v1h-1zM1209 687h1v1h-1zM1244 687h1v1h-1zM1279 687h1v1h-1zM1314 687h1v1h-1zM1349 687h1v1h-1zM1384 687h1v1h-1zM1419 687h1v1h-1zM1454 687h1v1h-1zM1489 687h1v1h-1zM1524 687h1v1h-1zM1559 687h1v1h-1zM1594 687h1v1h-1zM1629 687h1v1h-1zM1663 687h1v1h-1zM1698 687h1v1h-1zM1733 687h1v1h-1zM20 710h1v1h-1zM55 710h1v1h-1zM90 710h1v1h-1zM125 710h1v1h-1zM160 710h1v1h-1zM195 710h1v1h-1zM230 710h1v1h-1zM265 710h1v1h-1zM300 710h1v1h-1zM335 710h1v1h-1zM370 710h1v1h-1zM405 710h1v1h-1zM440 710h1v1h-1zM475 710h1v1h-1zM510 710h1v1h-1zM545 710h1v1h-1zM580 710h1v1h-1zM615 710h1v1h-1zM650 710h1v1h-1zM685 710h1v1h-1zM720 710h1v1h-1zM755 710h1v1h-1zM789 710h1v1h-1zM824 710h1v1h-1zM859 710h1v1h-1zM894 710h1v1h-1zM929 710h1v1h-1zM964 710h1v1h-1zM999 710h1v1h-1zM1034 710h1v1h-1zM1069 710h1v1h-1zM1104 710h1v1h-1zM1139 710h1v1h-1zM1174 710h1v1h-1zM1209 710h1v1h-1zM1244 710h1v1h-1zM1279 710h1v1h-1zM1314 710h1v1h-1zM1349 710h1v1h-1zM1384 710h1v1h-1zM1419 710h1v1h-1zM1454 710h1v1h-1zM1489 710h1v1h-1zM1524 710h1v1h-1zM1559 710h1v1h-1zM1594 710h1v1h-1zM1629 710h1v1h-1zM1663 710h1v1h-1zM1698 710h1v1h-1zM1733 710h1v1h-1zM20 734h1v1h-1zM55 734h1v1h-1zM90 734h1v1h-1zM125 734h1v1h-1zM160 734h1v1h-1zM195 734h1v1h-1zM230 734h1v1h-1zM265 734h1v1h-1zM300 734h1v1h-1zM335 734h1v1h-1zM370 734h1v1h-1zM405 734h1v1h-1zM440 734h1v1h-1zM475 734h1v1h-1zM510 734h1v1h-1zM545 734h1v1h-1zM580 734h1v1h-1zM615 734h1v1h-1zM650 734h1v1h-1zM685 734h1v1h-1zM720 734h1v1h-1zM755 734h1v1h-1zM789 734h1v1h-1zM824 734h1v1h-1zM859 734h1v1h-1zM894 734h1v1h-1zM929 734h1v1h-1zM964 734h1v1h-1zM999 734h1v1h-1zM1034 734h1v1h-1zM1069 734h1v1h-1zM1104 734h1v1h-1zM1139 734h1v1h-1zM1174 734h1v1h-1zM1209 734h1v1h-1zM1244 734h1v1h-1zM1279 734h1v1h-1zM1314 734h1v1h-1zM1349 734h1v1h-1zM1384 734h1v1h-1zM1419 734h1v1h-1zM1454 734h1v1h-1zM1489 734h1v1h-1zM1524 734h1v1h-1zM1559 734h1v1h-1zM1594 734h1v1h-1zM1629 734h1v1h-1zM1663 734h1v1h-1zM1698 734h1v1h-1zM1733 734h1v1h-1zM20 757h1v1h-1zM55 757h1v1h-1zM90 757h1v1h-1zM125 757h1v1h-1zM160 757h1v1h-1zM195 757h1v1h-1zM230 757h1v1h-1zM265 757h1v1h-1zM300 757h1v1h-1zM335 757h1v1h-1zM370 757h1v1h-1zM405 757h1v1h-1zM440 757h1v1h-1zM475 757h1v1h-1zM510 757h1v1h-1zM545 757h1v1h-1zM580 757h1v1h-1zM615 757h1v1h-1zM650 757h1v1h-1zM685 757h1v1h-1zM720 757h1v1h-1zM755 757h1v1h-1zM789 757h1v1h-1zM824 757h1v1h-1zM859 757h1v1h-1zM894 757h1v1h-1zM929 757h1v1h-1zM964 757h1v1h-1zM999 757h1v1h-1zM1034 757h1v1h-1zM1069 757h1v1h-1zM1104 757h1v1h-1zM1139 757h1v1h-1zM1174 757h1v1h-1zM1209 757h1v1h-1zM1244 757h1v1h-1zM1279 757h1v1h-1zM1314 757h1v1h-1zM1349 757h1v1h-1zM1384 757h1v1h-1zM1419 757h1v1h-1zM1454 757h1v1h-1zM1489 757h1v1h-1zM1524 757h1v1h-1zM1559 757h1v1h-1zM1594 757h1v1h-1zM1629 757h1v1h-1zM1663 757h1v1h-1zM1698 757h1v1h-1zM1733 757h1v1h-1zM20 778h1v1h-1zM55 778h1v1h-1zM90 778h1v1h-1zM125 778h1v1h-1zM160 778h1v1h-1zM195 778h1v1h-1zM230 778h1v1h-1zM265 778h1v1h-1zM300 778h1v1h-1zM335 778h1v1h-1zM370 778h1v1h-1zM405 778h1v1h-1zM440 778h1v1h-1zM475 778h1v1h-1zM510 778h1v1h-1zM545 778h1v1h-1zM580 778h1v1h-1zM615 778h1v1h-1zM650 778h1v1h-1zM685 778h1v1h-1zM720 778h1v1h-1zM755 778h1v1h-1zM789 778h1v1h-1zM824 778h1v1h-1zM859 778h1v1h-1zM894 778h1v1h-1zM929 778h1v1h-1zM964 778h1v1h-1zM999 778h1v1h-1zM1034 778h1v1h-1zM1069 778h1v1h-1zM1104 778h1v1h-1zM1139 778h1v1h-1zM1174 778h1v1h-1zM1209 778h1v1h-1zM1244 778h1v1h-1zM1279 778h1v1h-1zM1314 778h1v1h-1zM1349 778h1v1h-1zM1384 778h1v1h-1zM1419 778h1v1h-1zM1454 778h1v1h-1zM1489 778h1v1h-1zM1524 778h1v1h-1zM1559 778h1v1h-1zM1594 778h1v1h-1zM1629 778h1v1h-1zM1663 778h1v1h-1zM1698 778h1v1h-1zM1733 778h1v1h-1zM20 801h1v1h-1zM55 801h1v1h-1zM90 801h1v1h-1zM125 801h1v1h-1zM160 801h1v1h-1zM195 801h1v1h-1zM230 801h1v1h-1zM265 801h1v1h-1zM300 801h1v1h-1zM335 801h1v1h-1zM370 801h1v1h-1zM405 801h1v1h-1zM440 801h1v1h-1zM475 801h1v1h-1zM510 801h1v1h-1zM545 801h1v1h-1zM580 801h1v1h-1zM615 801h1v1h-1zM650 801h1v1h-1zM685 801h1v1h-1zM720 801h1v1h-1zM755 801h1v1h-1zM789 801h1v1h-1zM824 801h1v1h-1zM859 801h1v1h-1zM894 801h1v1h-1zM929 801h1v1h-1zM964 801h1v1h-1zM999 801h1v1h-1zM1034 801h1v1h-1zM1069 801h1v1h-1zM1104 801h1v1h-1zM1139 801h1v1h-1zM1174 801h1v1h-1zM1209 801h1v1h-1zM1244 801h1v1h-1zM1279 801h1v1h-1zM1314 801h1v1h-1zM1349 801h1v1h-1zM1384 801h1v1h-1zM1419 801h1v1h-1zM1454 801h1v1h-1zM1489 801h1v1h-1zM1524 801h1v1h-1zM1559 801h1v1h-1zM1594 801h1v1h-1zM1629 801h1v1h-1zM1663 801h1v1h-1zM1698 801h1v1h-1zM1733 801h1v1h-1zM20 824h1v1h-1zM55 824h1v1h-1zM90 824h1v1h-1zM125 824h1v1h-1zM160 824h1v1h-1zM195 824h1v1h-1zM230 824h1v1h-1zM265 824h1v1h-1zM300 824h1v1h-1zM335 824h1v1h-1zM370 824h1v1h-1zM405 824h1v1h-1zM440 824h1v1h-1zM475 824h1v1h-1zM510 824h1v1h-1zM545 824h1v1h-1zM580 824h1v1h-1zM615 824h1v1h-1zM650 824h1v1h-1zM685 824h1v1h-1zM720 824h1v1h-1zM755 824h1v1h-1zM789 824h1v1h-1zM824 824h1v1h-1zM859 824h1v1h-1zM894 824h1v1h-1zM929 824h1v1h-1zM964 824h1v1h-1zM999 824h1v1h-1zM1034 824h1v1h-1zM1069 824h1v1h-1zM1104 824h1v1h-1zM1139 824h1v1h-1zM1174 824h1v1h-1zM1209 824h1v1h-1zM1244 824h1v1h-1zM1279 824h1v1h-1zM1314 824h1v1h-1zM1349 824h1v1h-1zM1384 824h1v1h-1zM1419 824h1v1h-1zM1454 824h1v1h-1zM1489 824h1v1h-1zM1524 824h1v1h-1zM1559 824h1v1h-1zM1594 824h1v1h-1zM1629 824h1v1h-1zM1663 824h1v1h-1zM1698 824h1v1h-1zM1733 824h1v1h-1zM20 847h1v1h-1zM55 847h1v1h-1zM90 847h1v1h-1zM125 847h1v1h-1zM160 847h1v1h-1zM195 847h1v1h-1zM230 847h1v1h-1zM265 847h1v1h-1zM300 847h1v1h-1zM335 847h1v1h-1zM370 847h1v1h-1zM405 847h1v1h-1zM440 847h1v1h-1zM475 847h1v1h-1zM510 847h1v1h-1zM545 847h1v1h-1zM580 847h1v1h-1zM615 847h1v1h-1zM650 847h1v1h-1zM685 847h1v1h-1zM720 847h1v1h-1zM755 847h1v1h-1zM789 847h1v1h-1zM824 847h1v1h-1zM859 847h1v1h-1zM894 847h1v1h-1zM929 847h1v1h-1zM964 847h1v1h-1zM999 847h1v1h-1zM1034 847h1v1h-1zM1069 847h1v1h-1zM1104 847h1v1h-1zM1139 847h1v1h-1zM1174 847h1v1h-1zM1209 847h1v1h-1zM1244 847h1v1h-1zM1279 847h1v1h-1zM1314 847h1v1h-1zM1349 847h1v1h-1zM1384 847h1v1h-1zM1419 847h1v1h-1zM1454 847h1v1h-1zM1489 847h1v1h-1zM1524 847h1v1h-1zM1559 847h1v1h-1zM1594 847h1v1h-1zM1629 847h1v1h-1zM1663 847h1v1h-1zM1698 847h1v1h-1zM1733 847h1v1h-1zM20 871h1v1h-1zM55 871h1v1h-1zM90 871h1v1h-1zM125 871h1v1h-1zM160 871h1v1h-1zM195 871h1v1h-1zM230 871h1v1h-1zM265 871h1v1h-1zM300 871h1v1h-1zM335 871h1v1h-1zM370 871h1v1h-1zM405 871h1v1h-1zM440 871h1v1h-1zM475 871h1v1h-1zM510 871h1v1h-1zM545 871h1v1h-1zM580 871h1v1h-1zM615 871h1v1h-1zM650 871h1v1h-1zM685 871h1v1h-1zM720 871h1v1h-1zM755 871h1v1h-1zM789 871h1v1h-1zM824 871h1v1h-1zM859 871h1v1h-1zM894 871h1v1h-1zM929 871h1v1h-1zM964 871h1v1h-1zM999 871h1v1h-1zM1034 871h1v1h-1zM1069 871h1v1h-1zM1104 871h1v1h-1zM1139 871h1v1h-1zM1174 871h1v1h-1zM1209 871h1v1h-1zM1244 871h1v1h-1zM1279 871h1v1h-1zM1314 871h1v1h-1zM1349 871h1v1h-1zM1384 871h1v1h-1zM1419 871h1v1h-1zM1454 871h1v1h-1zM1489 871h1v1h-1zM1524 871h1v1h-1zM1559 871h1v1h-1zM1594 871h1v1h-1zM1629 871h1v1h-1zM1663 871h1v1h-1zM1698 871h1v1h-1zM1733 871h1v1h-1zM20 894h1v1h-1zM55 894h1v1h-1zM90 894h1v1h-1zM125 894h1v1h-1zM160 894h1v1h-1zM195 894h1v1h-1zM230 894h1v1h-1zM265 894h1v1h-1zM300 894h1v1h-1zM335 894h1v1h-1zM370 894h1v1h-1zM405 894h1v1h-1zM440 894h1v1h-1zM475 894h1v1h-1zM510 894h1v1h-1zM545 894h1v1h-1zM580 894h1v1h-1zM615 894h1v1h-1zM650 894h1v1h-1zM685 894h1v1h-1zM720 894h1v1h-1zM755 894h1v1h-1zM789 894h1v1h-1zM824 894h1v1h-1zM859 894h1v1h-1zM894 894h1v1h-1zM929 894h1v1h-1zM964 894h1v1h-1zM999 894h1v1h-1zM1034 894h1v1h-1zM1069 894h1v1h-1zM1104 894h1v1h-1zM1139 894h1v1h-1zM1174 894h1v1h-1zM1209 894h1v1h-1zM1244 894h1v1h-1zM1279 894h1v1h-1zM1314 894h1v1h-1zM1349 894h1v1h-1zM1384 894h1v1h-1zM1419 894h1v1h-1zM1454 894h1v1h-1zM1489 894h1v1h-1zM1524 894h1v1h-1zM1559 894h1v1h-1zM1594 894h1v1h-1zM1629 894h1v1h-1zM1663 894h1v1h-1zM1698 894h1v1h-1zM1733 894h1v1h-1zM20 917h1v1h-1zM55 917h1v1h-1zM90 917h1v1h-1zM125 917h1v1h-1zM160 917h1v1h-1zM195 917h1v1h-1zM230 917h1v1h-1zM265 917h1v1h-1zM300 917h1v1h-1zM335 917h1v1h-1zM370 917h1v1h-1zM405 917h1v1h-1zM440 917h1v1h-1zM475 917h1v1h-1zM510 917h1v1h-1zM545 917h1v1h-1zM580 917h1v1h-1zM615 917h1v1h-1zM650 917h1v1h-1zM685 917h1v1h-1zM720 917h1v1h-1zM755 917h1v1h-1zM789 917h1v1h-1zM824 917h1v1h-1zM859 917h1v1h-1zM894 917h1v1h-1zM929 917h1v1h-1zM964 917h1v1h-1zM999 917h1v1h-1zM1034 917h1v1h-1zM1069 917h1v1h-1zM1104 917h1v1h-1zM1139 917h1v1h-1zM1174 917h1v1h-1zM1209 917h1v1h-1zM1244 917h1v1h-1zM1279 917h1v1h-1zM1314 917h1v1h-1zM1349 917h1v1h-1zM1384 917h1v1h-1zM1419 917h1v1h-1zM1454 917h1v1h-1zM1489 917h1v1h-1zM1524 917h1v1h-1zM1559 917h1v1h-1zM1594 917h1v1h-1zM1629 917h1v1h-1zM1663 917h1v1h-1zM1698 917h1v1h-1zM1733 917h1v1h-1zM20 940h1v1h-1zM55 940h1v1h-1zM90 940h1v1h-1zM125 940h1v1h-1zM160 940h1v1h-1zM195 940h1v1h-1zM230 940h1v1h-1zM265 940h1v1h-1zM300 940h1v1h-1zM335 940h1v1h-1zM370 940h1v1h-1zM405 940h1v1h-1zM440 940h1v1h-1zM475 940h1v1h-1zM510 940h1v1h-1zM545 940h1v1h-1zM580 940h1v1h-1zM615 940h1v1h-1zM650 940h1v1h-1zM685 940h1v1h-1zM720 940h1v1h-1zM755 940h1v1h-1zM789 940h1v1h-1zM824 940h1v1h-1zM859 940h1v1h-1zM894 940h1v1h-1zM929 940h1v1h-1zM964 940h1v1h-1zM999 940h1v1h-1zM1034 940h1v1h-1zM1069 940h1v1h-1zM1104 940h1v1h-1zM1139 940h1v1h-1zM1174 940h1v1h-1zM1209 940h1v1h-1zM1244 940h1v1h-1zM1279 940h1v1h-1zM1314 940h1v1h-1zM1349 940h1v1h-1zM1384 940h1v1h-1zM1419 940h1v1h-1zM1454 940h1v1h-1zM1489 940h1v1h-1zM1524 940h1v1h-1zM1559 940h1v1h-1zM1594 940h1v1h-1zM1629 940h1v1h-1zM1663 940h1v1h-1zM1698 940h1v1h-1zM1733 940h1v1h-1zM20 963h1v1h-1zM55 963h1v1h-1zM90 963h1v1h-1zM125 963h1v1h-1zM160 963h1v1h-1zM195 963h1v1h-1zM230 963h1v1h-1zM265 963h1v1h-1zM300 963h1v1h-1zM335 963h1v1h-1zM370 963h1v1h-1zM405 963h1v1h-1zM440 963h1v1h-1zM475 963h1v1h-1zM510 963h1v1h-1zM545 963h1v1h-1zM580 963h1v1h-1zM615 963h1v1h-1zM650 963h1v1h-1zM685 963h1v1h-1zM720 963h1v1h-1zM755 963h1v1h-1zM789 963h1v1h-1zM824 963h1v1h-1zM859 963h1v1h-1zM894 963h1v1h-1zM929 963h1v1h-1zM964 963h1v1h-1zM999 963h1v1h-1zM1034 963h1v1h-1zM1069 963h1v1h-1zM1104 963h1v1h-1zM1139 963h1v1h-1zM1174 963h1v1h-1zM1209 963h1v1h-1zM1244 963h1v1h-1zM1279 963h1v1h-1zM1314 963h1v1h-1zM1349 963h1v1h-1zM1384 963h1v1h-1zM1419 963h1v1h-1zM1454 963h1v1h-1zM1489 963h1v1h-1zM1524 963h1v1h-1zM1559 963h1v1h-1zM1594 963h1v1h-1zM1629 963h1v1h-1zM1663 963h1v1h-1zM1698 963h1v1h-1zM1733 963h1v1h-1zM20 987h1v1h-1zM55 987h1v1h-1zM90 987h1v1h-1zM125 987h1v1h-1zM160 987h1v1h-1zM195 987h1v1h-1zM230 987h1v1h-1zM265 987h1v1h-1zM300 987h1v1h-1zM335 987h1v1h-1zM370 987h1v1h-1zM405 987h1v1h-1zM440 987h1v1h-1zM475 987h1v1h-1zM510 987h1v1h-1zM545 987h1v1h-1zM580 987h1v1h-1zM615 987h1v1h-1zM650 987h1v1h-1zM685 987h1v1h-1zM720 987h1v1h-1zM755 987h1v1h-1zM789 987h1v1h-1zM824 987h1v1h-1zM859 987h1v1h-1zM894 987h1v1h-1zM929 987h1v1h-1zM964 987h1v1h-1zM999 987h1v1h-1zM1034 987h1v1h-1zM1069 987h1v1h-1zM1104 987h1v1h-1zM1139 987h1v1h-1zM1174 987h1v1h-1zM1209 987h1v1h-1zM1244 987h1v1h-1zM1279 987h1v1h-1zM1314 987h1v1h-1zM1349 987h1v1h-1zM1384 987h1v1h-1zM1419 987h1v1h-1zM1454 987h1v1h-1zM1489 987h1v1h-1zM1524 987h1v1h-1zM1559 987h1v1h-1zM1594 987h1v1h-1zM1629 987h1v1h-1zM1663 987h1v1h-1zM1698 987h1v1h-1zM1733 987h1v1h-1z" fill="#a8a8a8"/><path d="M230 57h1v1h-1zM230 61h1v1h-1zM230 66h1v1h-1zM230 70h1v1h-1zM230 75h1v1h-1zM230 80h1v1h-1zM230 84h1v1h-1zM230 89h1v1h-1zM230 94h1v1h-1zM230 98h1v1h-1zM230 103h1v1h-1zM230 108h1v1h-1zM230 112h1v1h-1zM230 117h1v1h-1zM230 122h1v1h-1zM230 126h1v1h-1zM230 131h1v1h-1zM230 136h1v1h-1zM230 140h1v1h-1zM230 145h1v1h-1zM230 150h1v1h-1zM230 154h1v1h-1zM230 159h1v1h-1zM230 164h1v1h-1zM230 168h1v1h-1zM230 173h1v1h-1zM230 178h1v1h-1zM230 182h1v1h-1zM230 187h1v1h-1zM230 191h1v1h-1zM230 196h1v1h-1zM230 201h1v1h-1zM230 205h1v1h-1zM230 210h1v1h-1zM230 215h1v1h-1zM230 219h1v1h-1zM230 224h1v1h-1zM230 229h1v1h-1zM230 233h1v1h-1zM230 238h1v1h-1zM230 243h1v1h-1zM230 247h1v1h-1zM230 252h1v1h-1zM230 257h1v1h-1zM230 261h1v1h-1zM230 266h1v1h-1zM230 271h1v1h-1zM230 275h1v1h-1zM230 280h1v1h-1zM230 285h1v1h-1zM230 289h1v1h-1zM230 294h1v1h-1zM230 299h1v1h-1zM230 303h1v1h-1zM230 308h1v1h-1zM230 312h1v1h-1zM230 317h1v1h-1zM230 322h1v1h-1zM230 326h1v1h-1zM230 331h1v1h-1zM230 336h1v1h-1zM230 340h1v1h-1zM230 345h1v1h-1zM230 350h1v1h-1zM230 354h1v1h-1zM230 359h1v1h-1zM230 364h1v1h-1zM230 368h1v1h-1zM230 373h1v1h-1zM230 378h1v1h-1zM230 382h1v1h-1zM230 387h1v1h-1zM230 392h1v1h-1zM230 396h1v1h-1zM230 401h1v1h-1zM230 406h1v1h-1zM230 410h1v1h-1zM230 415h1v1h-1zM230 420h1v1h-1zM230 424h1v1h-1zM230 429h1v1h-1zM230 433h1v1h-1zM230 438h1v1h-1zM230 443h1v1h-1zM230 447h1v1h-1zM230 452h1v1h-1zM230 457h1v1h-1zM230 461h1v1h-1zM230 466h1v1h-1zM230 471h1v1h-1zM230 475h1v1h-1zM230 480h1v1h-1zM230 485h1v1h-1zM230 489h1v1h-1zM230 494h1v1h-1zM230 499h1v1h-1zM230 503h1v1h-1zM230 508h1v1h-1zM230 513h1v1h-1zM230 517h1v1h-1zM230 522h1v1h-1zM230 527h1v1h-1zM230 531h1v1h-1zM230 536h1v1h-1zM230 541h1v1h-1zM230 545h1v1h-1zM230 550h1v1h-1zM230 554h1v1h-1zM230 559h1v1h-1zM230 564h1v1h-1zM230 568h1v1h-1zM230 573h1v1h-1zM230 578h1v1h-1zM230 582h1v1h-1zM230 587h1v1h-1zM230 592h1v1h-1zM230 596h1v1h-1zM230 601h1v1h-1zM230 606h1v1h-1zM230 610h1v1h-1zM230 615h1v1h-1zM230 620h1v1h-1zM230 624h1v1h-1zM230 629h1v1h-1zM230 634h1v1h-1zM230 638h1v1h-1zM230 643h1v1h-1zM230 648h1v1h-1zM230 652h1v1h-1zM230 657h1v1h-1zM230 662h1v1h-1zM230 666h1v1h-1zM230 671h1v1h-1zM230 675h1v1h-1zM230 680h1v1h-1zM230 685h1v1h-1zM230 689h1v1h-1zM230 694h1v1h-1zM230 699h1v1h-1zM230 703h1v1h-1zM230 708h1v1h-1zM230 713h1v1h-1zM230 717h1v1h-1zM230 722h1v1h-1zM230 727h1v1h-1zM230 731h1v1h-1zM230 736h1v1h-1zM230 741h1v1h-1zM230 745h1v1h-1zM230 750h1v1h-1zM230 755h1v1h-1zM230 759h1v1h-1zM230 764h1v1h-1zM230 769h1v1h-1zM230 773h1v1h-1zM230 778h1v1h-1zM230 783h1v1h-1zM230 787h1v1h-1zM230 792h1v1h-1zM230 796h1v1h-1zM230 801h1v1h-1zM230 806h1v1h-1zM230 810h1v1h-1zM230 815h1v1h-1zM230 820h1v1h-1zM230 824h1v1h-1zM230 829h1v1h-1zM230 834h1v1h-1zM230 838h1v1h-1zM230 843h1v1h-1zM230 848h1v1h-1zM230 852h1v1h-1zM230 857h1v1h-1zM230 862h1v1h-1zM230 866h1v1h-1zM230 871h1v1h-1zM230 876h1v1h-1zM230 880h1v1h-1zM230 885h1v1h-1zM230 890h1v1h-1zM230 894h1v1h-1zM230 899h1v1h-1zM230 904h1v1h-1zM230 908h1v1h-1zM230 913h1v1h-1zM230 917h1v1h-1zM230 922h1v1h-1zM230 927h1v1h-1zM230 931h1v1h-1zM230 936h1v1h-1zM230 941h1v1h-1zM230 945h1v1h-1zM230 950h1v1h-1zM230 955h1v1h-1zM230 959h1v1h-1zM230 964h1v1h-1zM230 969h1v1h-1zM230 973h1v1h-1zM230 978h1v1h-1zM230 983h1v1h-1zM230 987h1v1h-1zM405 57h1v1h-1zM405 61h1v1h-1zM405 66h1v1h-1zM405 70h1v1h-1zM405 75h1v1h-1zM405 80h1v1h-1zM405 84h1v1h-1zM405 89h1v1h-1zM405 94h1v1h-1zM405 98h1v1h-1zM405 103h1v1h-1zM405 108h1v1h-1zM405 112h1v1h-1zM405 117h1v1h-1zM405 122h1v1h-1zM405 126h1v1h-1zM405 131h1v1h-1zM405 136h1v1h-1zM405 140h1v1h-1zM405 145h1v1h-1zM405 150h1v1h-1zM405 154h1v1h-1zM405 159h1v1h-1zM405 164h1v1h-1zM405 168h1v1h-1zM405 173h1v1h-1zM405 178h1v1h-1zM405 182h1v1h-1zM405 187h1v1h-1zM405 191h1v1h-1zM405 196h1v1h-1zM405 201h1v1h-1zM405 205h1v1h-1zM405 210h1v1h-1zM405 215h1v1h-1zM405 219h1v1h-1zM405 224h1v1h-1zM405 229h1v1h-1zM405 233h1v1h-1zM405 238h1v1h-1zM405 243h1v1h-1zM405 247h1v1h-1zM405 252h1v1h-1zM405 257h1v1h-1zM405 261h1v1h-1zM405 266h1v1h-1zM405 271h1v1h-1zM405 275h1v1h-1zM405 280h1v1h-1zM405 285h1v1h-1zM405 289h1v1h-1zM405 294h1v1h-1zM405 299h1v1h-1zM405 303h1v1h-1zM405 308h1v1h-1zM405 312h1v1h-1zM405 317h1v1h-1zM405 322h1v1h-1zM405 326h1v1h-1zM405 331h1v1h-1zM405 336h1v1h-1zM405 340h1v1h-1zM405 345h1v1h-1zM405 350h1v1h-1zM405 354h1v1h-1zM405 359h1v1h-1zM405 364h1v1h-1zM405 368h1v1h-1zM405 373h1v1h-1zM405 378h1v1h-1zM405 382h1v1h-1zM405 387h1v1h-1zM405 392h1v1h-1zM405 396h1v1h-1zM405 401h1v1h-1zM405 406h1v1h-1zM405 410h1v1h-1zM405 415h1v1h-1zM405 420h1v1h-1zM405 424h1v1h-1zM405 429h1v1h-1zM405 433h1v1h-1zM405 438h1v1h-1zM405 443h1v1h-1zM405 447h1v1h-1zM405 452h1v1h-1zM405 457h1v1h-1zM405 461h1v1h-1zM405 466h1v1h-1zM405 471h1v1h-1zM405 475h1v1h-1zM405 480h1v1h-1zM405 485h1v1h-1zM405 489h1v1h-1zM405 494h1v1h-1zM405 499h1v1h-1zM405 503h1v1h-1zM405 508h1v1h-1zM405 513h1v1h-1zM405 517h1v1h-1zM405 522h1v1h-1zM405 527h1v1h-1zM405 531h1v1h-1zM405 536h1v1h-1zM405 541h1v1h-1zM405 545h1v1h-1zM405 550h1v1h-1zM405 554h1v1h-1zM405 559h1v1h-1zM405 564h1v1h-1zM405 568h1v1h-1zM405 573h1v1h-1zM405 578h1v1h-1zM405 582h1v1h-1zM405 587h1v1h-1zM405 592h1v1h-1zM405 596h1v1h-1zM405 601h1v1h-1zM405 606h1v1h-1zM405 610h1v1h-1zM405 615h1v1h-1zM405 620h1v1h-1zM405 624h1v1h-1zM405 629h1v1h-1zM405 634h1v1h-1zM405 638h1v1h-1zM405 643h1v1h-1zM405 648h1v1h-1zM405 652h1v1h-1zM405 657h1v1h-1zM405 662h1v1h-1zM405 666h1v1h-1zM405 671h1v1h-1zM405 675h1v1h-1zM405 680h1v1h-1zM405 685h1v1h-1zM405 689h1v1h-1zM405 694h1v1h-1zM405 699h1v1h-1zM405 703h1v1h-1zM405 708h1v1h-1zM405 713h1v1h-1zM405 717h1v1h-1zM405 722h1v1h-1zM405 727h1v1h-1zM405 731h1v1h-1zM405 736h1v1h-1zM405 741h1v1h-1zM405 745h1v1h-1zM405 750h1v1h-1zM405 755h1v1h-1zM405 759h1v1h-1zM405 764h1v1h-1zM405 769h1v1h-1zM405 773h1v1h-1zM405 778h1v1h-1zM405 783h1v1h-1zM405 787h1v1h-1zM405 792h1v1h-1zM405 796h1v1h-1zM405 801h1v1h-1zM405 806h1v1h-1zM405 810h1v1h-1zM405 815h1v1h-1zM405 820h1v1h-1zM405 824h1v1h-1zM405 829h1v1h-1zM405 834h1v1h-1zM405 838h1v1h-1zM405 843h1v1h-1zM405 848h1v1h-1zM405 852h1v1h-1zM405 857h1v1h-1zM405 862h1v1h-1zM405 866h1v1h-1zM405 871h1v1h-1zM405 876h1v1h-1zM405 880h1v1h-1zM405 885h1v1h-1zM405 890h1v1h-1zM405 894h1v1h-1zM405 899h1v1h-1zM405 904h1v1h-1zM405 908h1v1h-1zM405 913h1v1h-1zM405 917h1v1h-1zM405 922h1v1h-1zM405 927h1v1h-1zM405 931h1v1h-1zM405 936h1v1h-1zM405 941h1v1h-1zM405 945h1v1h-1zM405 950h1v1h-1zM405 955h1v1h-1zM405 959h1v1h-1zM405 964h1v1h-1zM405 969h1v1h-1zM405 973h1v1h-1zM405 978h1v1h-1zM405 983h1v1h-1zM405 987h1v1h-1zM580 57h1v1h-1zM580 61h1v1h-1zM580 66h1v1h-1zM580 70h1v1h-1zM580 75h1v1h-1zM580 80h1v1h-1zM580 84h1v1h-1zM580 89h1v1h-1zM580 94h1v1h-1zM580 98h1v1h-1zM580 103h1v1h-1zM580 108h1v1h-1zM580 112h1v1h-1zM580 117h1v1h-1zM580 122h1v1h-1zM580 126h1v1h-1zM580 131h1v1h-1zM580 136h1v1h-1zM580 140h1v1h-1zM580 145h1v1h-1zM580 150h1v1h-1zM580 154h1v1h-1zM580 159h1v1h-1zM580 164h1v1h-1zM580 168h1v1h-1zM580 173h1v1h-1zM580 178h1v1h-1zM580 182h1v1h-1zM580 187h1v1h-1zM580 191h1v1h-1zM580 196h1v1h-1zM580 201h1v1h-1zM580 205h1v1h-1zM580 210h1v1h-1zM580 215h1v1h-1zM580 219h1v1h-1zM580 224h1v1h-1zM580 229h1v1h-1zM580 233h1v1h-1zM580 238h1v1h-1zM580 243h1v1h-1zM580 247h1v1h-1zM580 252h1v1h-1zM580 257h1v1h-1zM580 261h1v1h-1zM580 266h1v1h-1zM580 271h1v1h-1zM580 275h1v1h-1zM580 280h1v1h-1zM580 285h1v1h-1zM580 289h1v1h-1zM580 294h1v1h-1zM580 299h1v1h-1zM580 303h1v1h-1zM580 308h1v1h-1zM580 312h1v1h-1zM580 317h1v1h-1zM580 322h1v1h-1zM580 326h1v1h-1zM580 331h1v1h-1zM580 336h1v1h-1zM580 340h1v1h-1zM580 345h1v1h-1zM580 350h1v1h-1zM580 354h1v1h-1zM580 359h1v1h-1zM580 364h1v1h-1zM580 368h1v1h-1zM580 373h1v1h-1zM580 378h1v1h-1zM580 382h1v1h-1zM580 387h1v1h-1zM580 392h1v1h-1zM580 396h1v1h-1zM580 401h1v1h-1zM580 406h1v1h-1zM580 410h1v1h-1zM580 415h1v1h-1zM580 420h1v1h-1zM580 424h1v1h-1zM580 429h1v1h-1zM580 433h1v1h-1zM580 438h1v1h-1zM580 443h1v1h-1zM580 447h1v1h-1zM580 452h1v1h-1zM580 457h1v1h-1zM580 461h1v1h-1zM580 466h1v1h-1zM580 471h1v1h-1zM580 475h1v1h-1zM580 480h1v1h-1zM580 485h1v1h-1zM580 489h1v1h-1zM580 494h1v1h-1zM580 499h1v1h-1zM580 503h1v1h-1zM580 508h1v1h-1zM580 513h1v1h-1zM580 517h1v1h-1zM580 522h1v1h-1zM580 527h1v1h-1zM580 531h1v1h-1zM580 536h1v1h-1zM580 541h1v1h-1zM580 545h1v1h-1zM580 550h1v1h-1zM580 554h1v1h-1zM580 559h1v1h-1zM580 564h1v1h-1zM580 568h1v1h-1zM580 573h1v1h-1zM580 578h1v1h-1zM580 582h1v1h-1zM580 587h1v1h-1zM580 592h1v1h-1zM580 596h1v1h-1zM580 601h1v1h-1zM580 606h1v1h-1zM580 610h1v1h-1zM580 615h1v1h-1zM580 620h1v1h-1zM580 624h1v1h-1zM580 629h1v1h-1zM580 634h1v1h-1zM580 638h1v1h-1zM580 643h1v1h-1zM580 648h1v1h-1zM580 652h1v1h-1zM580 657h1v1h-1zM580 662h1v1h-1zM580 666h1v1h-1zM580 671h1v1h-1zM580 675h1v1h-1zM580 680h1v1h-1zM580 685h1v1h-1zM580 689h1v1h-1zM580 694h1v1h-1zM580 699h1v1h-1zM580 703h1v1h-1zM580 708h1v1h-1zM580 713h1v1h-1zM580 717h1v1h-1zM580 722h1v1h-1zM580 727h1v1h-1zM580 731h1v1h-1zM580 736h1v1h-1zM580 741h1v1h-1zM580 745h1v1h-1zM580 750h1v1h-1zM580 755h1v1h-1zM580 759h1v1h-1zM580 764h1v1h-1zM580 769h1v1h-1zM580 773h1v1h-1zM580 778h1v1h-1zM580 783h1v1h-1zM580 787h1v1h-1zM580 792h1v1h-1zM580 796h1v1h-1zM580 801h1v1h-1zM580 806h1v1h-1zM580 810h1v1h-1zM580 815h1v1h-1zM580 820h1v1h-1zM580 824h1v1h-1zM580 829h1v1h-1zM580 834h1v1h-1zM580 838h1v1h-1zM580 843h1v1h-1zM580 848h1v1h-1zM580 852h1v1h-1zM580 857h1v1h-1zM580 862h1v1h-1zM580 866h1v1h-1zM580 871h1v1h-1zM580 876h1v1h-1zM580 880h1v1h-1zM580 885h1v1h-1zM580 890h1v1h-1zM580 894h1v1h-1zM580 899h1v1h-1zM580 904h1v1h-1zM580 908h1v1h-1zM580 913h1v1h-1zM580 917h1v1h-1zM580 922h1v1h-1zM580 927h1v1h-1zM580 931h1v1h-1zM580 936h1v1h-1zM580 941h1v1h-1zM580 945h1v1h-1zM580 950h1v1h-1zM580 955h1v1h-1zM580 959h1v1h-1zM580 964h1v1h-1zM580 969h1v1h-1zM580 973h1v1h-1zM580 978h1v1h-1zM580 983h1v1h-1zM580 987h1v1h-1zM755 57h1v1h-1zM755 61h1v1h-1zM755 66h1v1h-1zM755 70h1v1h-1zM755 75h1v1h-1zM755 80h1v1h-1zM755 84h1v1h-1zM755 89h1v1h-1zM755 94h1v1h-1zM755 98h1v1h-1zM755 103h1v1h-1zM755 108h1v1h-1zM755 112h1v1h-1zM755 117h1v1h-1zM755 122h1v1h-1zM755 126h1v1h-1zM755 131h1v1h-1zM755 136h1v1h-1zM755 140h1v1h-1zM755 145h1v1h-1zM755 150h1v1h-1zM755 154h1v1h-1zM755 159h1v1h-1zM755 164h1v1h-1zM755 168h1v1h-1zM755 173h1v1h-1zM755 178h1v1h-1zM755 182h1v1h-1zM755 187h1v1h-1zM755 191h1v1h-1zM755 196h1v1h-1zM755 201h1v1h-1zM755 205h1v1h-1zM755 210h1v1h-1zM755 215h1v1h-1zM755 219h1v1h-1zM755 224h1v1h-1zM755 229h1v1h-1zM755 233h1v1h-1zM755 238h1v1h-1zM755 243h1v1h-1zM755 247h1v1h-1zM755 252h1v1h-1zM755 257h1v1h-1zM755 261h1v1h-1zM755 266h1v1h-1zM755 271h1v1h-1zM755 275h1v1h-1zM755 280h1v1h-1zM755 285h1v1h-1zM755 289h1v1h-1zM755 294h1v1h-1zM755 299h1v1h-1zM755 303h1v1h-1zM755 308h1v1h-1zM755 312h1v1h-1zM755 317h1v1h-1zM755 322h1v1h-1zM755 326h1v1h-1zM755 331h1v1h-1zM755 336h1v1h-1zM755 340h1v1h-1zM755 345h1v1h-1zM755 350h1v1h-1zM755 354h1v1h-1zM755 359h1v1h-1zM755 364h1v1h-1zM755 368h1v1h-1zM755 373h1v1h-1zM755 378h1v1h-1zM755 382h1v1h-1zM755 387h1v1h-1zM755 392h1v1h-1zM755 396h1v1h-1zM755 401h1v1h-1zM755 406h1v1h-1zM755 410h1v1h-1zM755 415h1v1h-1zM755 420h1v1h-1zM755 424h1v1h-1zM755 429h1v1h-1zM755 433h1v1h-1zM755 438h1v1h-1zM755 443h1v1h-1zM755 447h1v1h-1zM755 452h1v1h-1zM755 457h1v1h-1zM755 461h1v1h-1zM755 466h1v1h-1zM755 471h1v1h-1zM755 475h1v1h-1zM755 480h1v1h-1zM755 485h1v1h-1zM755 489h1v1h-1zM755 494h1v1h-1zM755 499h1v1h-1zM755 503h1v1h-1zM755 508h1v1h-1zM755 513h1v1h-1zM755 517h1v1h-1zM755 522h1v1h-1zM755 527h1v1h-1zM755 531h1v1h-1zM755 536h1v1h-1zM755 541h1v1h-1zM755 545h1v1h-1zM755 550h1v1h-1zM755 554h1v1h-1zM755 559h1v1h-1zM755 564h1v1h-1zM755 568h1v1h-1zM755 573h1v1h-1zM755 578h1v1h-1zM755 582h1v1h-1zM755 587h1v1h-1zM755 592h1v1h-1zM755 596h1v1h-1zM755 601h1v1h-1zM755 606h1v1h-1zM755 610h1v1h-1zM755 615h1v1h-1zM755 620h1v1h-1zM755 624h1v1h-1zM755 629h1v1h-1zM755 634h1v1h-1zM755 638h1v1h-1zM755 643h1v1h-1zM755 648h1v1h-1zM755 652h1v1h-1zM755 657h1v1h-1zM755 662h1v1h-1zM755 666h1v1h-1zM755 671h1v1h-1zM755 675h1v1h-1zM755 680h1v1h-1zM755 685h1v1h-1zM755 689h1v1h-1zM755 694h1v1h-1zM755 699h1v1h-1zM755 703h1v1h-1zM755 708h1v1h-1zM755 713h1v1h-1zM755 717h1v1h-1zM755 722h1v1h-1zM755 727h1v1h-1zM755 731h1v1h-1zM755 736h1v1h-1zM755 741h1v1h-1zM755 745h1v1h-1zM755 750h1v1h-1zM755 755h1v1h-1zM755 759h1v1h-1zM755 764h1v1h-1zM755 769h1v1h-1zM755 773h1v1h-1zM755 778h1v1h-1zM755 783h1v1h-1zM755 787h1v1h-1zM755 792h1v1h-1zM755 796h1v1h-1zM755 801h1v1h-1zM755 806h1v1h-1zM755 810h1v1h-1zM755 815h1v1h-1zM755 820h1v1h-1zM755 824h1v1h-1zM755 829h1v1h-1zM755 834h1v1h-1zM755 838h1v1h-1zM755 843h1v1h-1zM755 848h1v1h-1zM755 852h1v1h-1zM755 857h1v1h-1zM755 862h1v1h-1zM755 866h1v1h-1zM755 871h1v1h-1zM755 876h1v1h-1zM755 880h1v1h-1zM755 885h1v1h-1zM755 890h1v1h-1zM755 894h1v1h-1zM755 899h1v1h-1zM755 904h1v1h-1zM755 908h1v1h-1zM755 913h1v1h-1zM755 917h1v1h-1zM755 922h1v1h-1zM755 927h1v1h-1zM755 931h1v1h-1zM755 936h1v1h-1zM755 941h1v1h-1zM755 945h1v1h-1zM755 950h1v1h-1zM755 955h1v1h-1zM755 959h1v1h-1zM755 964h1v1h-1zM755 969h1v1h-1zM755 973h1v1h-1zM755 978h1v1h-1zM755 983h1v1h-1zM755 987h1v1h-1zM929 57h1v1h-1zM929 61h1v1h-1zM929 66h1v1h-1zM929 70h1v1h-1zM929 75h1v1h-1zM929 80h1v1h-1zM929 84h1v1h-1zM929 89h1v1h-1zM929 94h1v1h-1zM929 98h1v1h-1zM929 103h1v1h-1zM929 108h1v1h-1zM929 112h1v1h-1zM929 117h1v1h-1zM929 122h1v1h-1zM929 126h1v1h-1zM929 131h1v1h-1zM929 136h1v1h-1zM929 140h1v1h-1zM929 145h1v1h-1zM929 150h1v1h-1zM929 154h1v1h-1zM929 159h1v1h-1zM929 164h1v1h-1zM929 168h1v1h-1zM929 173h1v1h-1zM929 178h1v1h-1zM929 182h1v1h-1zM929 187h1v1h-1zM929 191h1v1h-1zM929 196h1v1h-1zM929 201h1v1h-1zM929 205h1v1h-1zM929 210h1v1h-1zM929 215h1v1h-1zM929 219h1v1h-1zM929 224h1v1h-1zM929 229h1v1h-1zM929 233h1v1h-1zM929 238h1v1h-1zM929 243h1v1h-1zM929 247h1v1h-1zM929 252h1v1h-1zM929 257h1v1h-1zM929 261h1v1h-1zM929 266h1v1h-1zM929 271h1v1h-1zM929 275h1v1h-1zM929 280h1v1h-1zM929 285h1v1h-1zM929 289h1v1h-1zM929 294h1v1h-1zM929 299h1v1h-1zM929 303h1v1h-1zM929 308h1v1h-1zM929 312h1v1h-1zM929 317h1v1h-1zM929 322h1v1h-1zM929 326h1v1h-1zM929 331h1v1h-1zM929 336h1v1h-1zM929 340h1v1h-1zM929 345h1v1h-1zM929 350h1v1h-1zM929 354h1v1h-1zM929 359h1v1h-1zM929 364h1v1h-1zM929 368h1v1h-1zM929 373h1v1h-1zM929 378h1v1h-1zM929 382h1v1h-1zM929 387h1v1h-1zM929 392h1v1h-1zM929 396h1v1h-1zM929 401h1v1h-1zM929 406h1v1h-1zM929 410h1v1h-1zM929 415h1v1h-1zM929 420h1v1h-1zM929 424h1v1h-1zM929 429h1v1h-1zM929 433h1v1h-1zM929 438h1v1h-1zM929 443h1v1h-1zM929 447h1v1h-1zM929 452h1v1h-1zM929 457h1v1h-1zM929 461h1v1h-1zM929 466h1v1h-1zM929 471h1v1h-1zM929 475h1v1h-1zM929 480h1v1h-1zM929 485h1v1h-1zM929 489h1v1h-1zM929 494h1v1h-1zM929 499h1v1h-1zM929 503h1v1h-1zM929 508h1v1h-1zM929 513h1v1h-1zM929 517h1v1h-1zM929 522h1v1h-1zM929 527h1v1h-1zM929 531h1v1h-1zM929 536h1v1h-1zM929 541h1v1h-1zM929 545h1v1h-1zM929 550h1v1h-1zM929 554h1v1h-1zM929 559h1v1h-1zM929 564h1v1h-1zM929 568h1v1h-1zM929 573h1v1h-1zM929 578h1v1h-1zM929 582h1v1h-1zM929 587h1v1h-1zM929 592h1v1h-1zM929 596h1v1h-1zM929 601h1v1h-1zM929 606h1v1h-1zM929 610h1v1h-1zM929 615h1v1h-1zM929 620h1v1h-1zM929 624h1v1h-1zM929 629h1v1h-1zM929 634h1v1h-1zM929 638h1v1h-1zM929 643h1v1h-1zM929 648h1v1h-1zM929 652h1v1h-1zM929 657h1v1h-1zM929 662h1v1h-1zM929 666h1v1h-1zM929 671h1v1h-1zM929 675h1v1h-1zM929 680h1v1h-1zM929 685h1v1h-1zM929 689h1v1h-1zM929 694h1v1h-1zM929 699h1v1h-1zM929 703h1v1h-1zM929 708h1v1h-1zM929 713h1v1h-1zM929 717h1v1h-1zM929 722h1v1h-1zM929 727h1v1h-1zM929 731h1v1h-1zM929 736h1v1h-1zM929 741h1v1h-1zM929 745h1v1h-1zM929 750h1v1h-1zM929 755h1v1h-1zM929 759h1v1h-1zM929 764h1v1h-1zM929 769h1v1h-1zM929 773h1v1h-1zM929 778h1v1h-1zM929 783h1v1h-1zM929 787h1v1h-1zM929 792h1v1h-1zM929 796h1v1h-1zM929 801h1v1h-1zM929 806h1v1h-1zM929 810h1v1h-1zM929 815h1v1h-1zM929 820h1v1h-1zM929 824h1v1h-1zM929 829h1v1h-1zM929 834h1v1h-1zM929 838h1v1h-1zM929 843h1v1h-1zM929 848h1v1h-1zM929 852h1v1h-1zM929 857h1v1h-1zM929 862h1v1h-1zM929 866h1v1h-1zM929 871h1v1h-1zM929 876h1v1h-1zM929 880h1v1h-1zM929 885h1v1h-1zM929 890h1v1h-1zM929 894h1v1h-1zM929 899h1v1h-1zM929 904h1v1h-1zM929 908h1v1h-1zM929 913h1v1h-1zM929 917h1v1h-1zM929 922h1v1h-1zM929 927h1v1h-1zM929 931h1v1h-1zM929 936h1v1h-1zM929 941h1v1h-1zM929 945h1v1h-1zM929 950h1v1h-1zM929 955h1v1h-1zM929 959h1v1h-1zM929 964h1v1h-1zM929 969h1v1h-1zM929 973h1v1h-1zM929 978h1v1h-1zM929 983h1v1h-1zM929 987h1v1h-1zM1104 57h1v1h-1zM1104 61h1v1h-1zM1104 66h1v1h-1zM1104 70h1v1h-1zM1104 75h1v1h-1zM1104 80h1v1h-1zM1104 84h1v1h-1zM1104 89h1v1h-1zM1104 94h1v1h-1zM1104 98h1v1h-1zM1104 103h1v1h-1zM1104 108h1v1h-1zM1104 112h1v1h-1zM1104 117h1v1h-1zM1104 122h1v1h-1zM1104 126h1v1h-1zM1104 131h1v1h-1zM1104 136h1v1h-1zM1104 140h1v1h-1zM1104 145h1v1h-1zM1104 150h1v1h-1zM1104 154h1v1h-1zM1104 159h1v1h-1zM1104 164h1v1h-1zM1104 168h1v1h-1zM1104 173h1v1h-1zM1104 178h1v1h-1zM1104 182h1v1h-1zM1104 187h1v1h-1zM1104 191h1v1h-1zM1104 196h1v1h-1zM1104 201h1v1h-1zM1104 205h1v1h-1zM1104 210h1v1h-1zM1104 215h1v1h-1zM1104 219h1v1h-1zM1104 224h1v1h-1zM1104 229h1v1h-1zM1104 233h1v1h-1zM1104 238h1v1h-1zM1104 243h1v1h-1zM1104 247h1v1h-1zM1104 252h1v1h-1zM1104 257h1v1h-1zM1104 261h1v1h-1zM1104 266h1v1h-1zM1104 271h1v1h-1zM1104 275h1v1h-1zM1104 280h1v1h-1zM1104 285h1v1h-1zM1104 289h1v1h-1zM1104 294h1v1h-1zM1104 299h1v1h-1zM1104 303h1v1h-1zM1104 308h1v1h-1zM1104 312h1v1h-1zM1104 317h1v1h-1zM1104 322h1v1h-1zM1104 326h1v1h-1zM1104 331h1v1h-1zM1104 336h1v1h-1zM1104 340h1v1h-1zM1104 345h1v1h-1zM1104 350h1v1h-1zM1104 354h1v1h-1zM1104 359h1v1h-1zM1104 364h1v1h-1zM1104 368h1v1h-1zM1104 373h1v1h-1zM1104 378h1v1h-1zM1104 382h1v1h-1zM1104 387h1v1h-1zM1104 392h1v1h-1zM1104 396h1v1h-1zM1104 401h1v1h-1zM1104 406h1v1h-1zM1104 410h1v1h-1zM1104 415h1v1h-1zM1104 420h1v1h-1zM1104 424h1v1h-1zM1104 429h1v1h-1zM1104 433h1v1h-1zM1104 438h1v1h-1zM1104 443h1v1h-1zM1104 447h1v1h-1zM1104 452h1v1h-1zM1104 457h1v1h-1zM1104 461h1v1h-1zM1104 466h1v1h-1zM1104 471h1v1h-1zM1104 475h1v1h-1zM1104 480h1v1h-1zM1104 485h1v1h-1zM1104 489h1v1h-1zM1104 494h1v1h-1zM1104 499h1v1h-1zM1104 503h1v1h-1zM1104 508h1v1h-1zM1104 513h1v1h-1zM1104 517h1v1h-1zM1104 522h1v1h-1zM1104 527h1v1h-1zM1104 531h1v1h-1zM1104 536h1v1h-1zM1104 541h1v1h-1zM1104 545h1v1h-1zM1104 550h1v1h-1zM1104 554h1v1h-1zM1104 559h1v1h-1zM1104 564h1v1h-1zM1104 568h1v1h-1zM1104 573h1v1h-1zM1104 578h1v1h-1zM1104 582h1v1h-1zM1104 587h1v1h-1zM1104 592h1v1h-1zM1104 596h1v1h-1zM1104 601h1v1h-1zM1104 606h1v1h-1zM1104 610h1v1h-1zM1104 615h1v1h-1zM1104 620h1v1h-1zM1104 624h1v1h-1zM1104 629h1v1h-1zM1104 634h1v1h-1zM1104 638h1v1h-1zM1104 643h1v1h-1zM1104 648h1v1h-1zM1104 652h1v1h-1zM1104 657h1v1h-1zM1104 662h1v1h-1zM1104 666h1v1h-1zM1104 671h1v1h-1zM1104 675h1v1h-1zM1104 680h1v1h-1zM1104 685h1v1h-1zM1104 689h1v1h-1zM1104 694h1v1h-1zM1104 699h1v1h-1zM1104 703h1v1h-1zM1104 708h1v1h-1zM1104 713h1v1h-1zM1104 717h1v1h-1zM1104 722h1v1h-1zM1104 727h1v1h-1zM1104 731h1v1h-1zM1104 736h1v1h-1zM1104 741h1v1h-1zM1104 745h1v1h-1zM1104 750h1v1h-1zM1104 755h1v1h-1zM1104 759h1v1h-1zM1104 764h1v1h-1zM1104 769h1v1h-1zM1104 773h1v1h-1zM1104 778h1v1h-1zM1104 783h1v1h-1zM1104 787h1v1h-1zM1104 792h1v1h-1zM1104 796h1v1h-1zM1104 801h1v1h-1zM1104 806h1v1h-1zM1104 810h1v1h-1zM1104 815h1v1h-1zM1104 820h1v1h-1zM1104 824h1v1h-1zM1104 829h1v1h-1zM1104 834h1v1h-1zM1104 838h1v1h-1zM1104 843h1v1h-1zM1104 848h1v1h-1zM1104 852h1v1h-1zM1104 857h1v1h-1zM1104 862h1v1h-1zM1104 866h1v1h-1zM1104 871h1v1h-1zM1104 876h1v1h-1zM1104 880h1v1h-1zM1104 885h1v1h-1zM1104 890h1v1h-1zM1104 894h1v1h-1zM1104 899h1v1h-1zM1104 904h1v1h-1zM1104 908h1v1h-1zM1104 913h1v1h-1zM1104 917h1v1h-1zM1104 922h1v1h-1zM1104 927h1v1h-1zM1104 931h1v1h-1zM1104 936h1v1h-1zM1104 941h1v1h-1zM1104 945h1v1h-1zM1104 950h1v1h-1zM1104 955h1v1h-1zM1104 959h1v1h-1zM1104 964h1v1h-1zM1104 969h1v1h-1zM1104 973h1v1h-1zM1104 978h1v1h-1zM1104 983h1v1h-1zM1104 987h1v1h-1zM1279 57h1v1h-1zM1279 61h1v1h-1zM1279 66h1v1h-1zM1279 70h1v1h-1zM1279 75h1v1h-1zM1279 80h1v1h-1zM1279 84h1v1h-1zM1279 89h1v1h-1zM1279 94h1v1h-1zM1279 98h1v1h-1zM1279 103h1v1h-1zM1279 108h1v1h-1zM1279 112h1v1h-1zM1279 117h1v1h-1zM1279 122h1v1h-1zM1279 126h1v1h-1zM1279 131h1v1h-1zM1279 136h1v1h-1zM1279 140h1v1h-1zM1279 145h1v1h-1zM1279 150h1v1h-1zM1279 154h1v1h-1zM1279 159h1v1h-1zM1279 164h1v1h-1zM1279 168h1v1h-1zM1279 173h1v1h-1zM1279 178h1v1h-1zM1279 182h1v1h-1zM1279 187h1v1h-1zM1279 191h1v1h-1zM1279 196h1v1h-1zM1279 201h1v1h-1zM1279 205h1v1h-1zM1279 210h1v1h-1zM1279 215h1v1h-1zM1279 219h1v1h-1zM1279 224h1v1h-1zM1279 229h1v1h-1zM1279 233h1v1h-1zM1279 238h1v1h-1zM1279 243h1v1h-1zM1279 247h1v1h-1zM1279 252h1v1h-1zM1279 257h1v1h-1zM1279 261h1v1h-1zM1279 266h1v1h-1zM1279 271h1v1h-1zM1279 275h1v1h-1zM1279 280h1v1h-1zM1279 285h1v1h-1zM1279 289h1v1h-1zM1279 294h1v1h-1zM1279 299h1v1h-1zM1279 303h1v1h-1zM1279 308h1v1h-1zM1279 312h1v1h-1zM1279 317h1v1h-1zM1279 322h1v1h-1zM1279 326h1v1h-1zM1279 331h1v1h-1zM1279 336h1v1h-1zM1279 340h1v1h-1zM1279 345h1v1h-1zM1279 350h1v1h-1zM1279 354h1v1h-1zM1279 359h1v1h-1zM1279 364h1v1h-1zM1279 368h1v1h-1zM1279 373h1v1h-1zM1279 378h1v1h-1zM1279 382h1v1h-1zM1279 387h1v1h-1zM1279 392h1v1h-1zM1279 396h1v1h-1zM1279 401h1v1h-1zM1279 406h1v1h-1zM1279 410h1v1h-1zM1279 415h1v1h-1zM1279 420h1v1h-1zM1279 424h1v1h-1zM1279 429h1v1h-1zM1279 433h1v1h-1zM1279 438h1v1h-1zM1279 443h1v1h-1zM1279 447h1v1h-1zM1279 452h1v1h-1zM1279 457h1v1h-1zM1279 461h1v1h-1zM1279 466h1v1h-1zM1279 471h1v1h-1zM1279 475h1v1h-1zM1279 480h1v1h-1zM1279 485h1v1h-1zM1279 489h1v1h-1zM1279 494h1v1h-1zM1279 499h1v1h-1zM1279 503h1v1h-1zM1279 508h1v1h-1zM1279 513h1v1h-1zM1279 517h1v1h-1zM1279 522h1v1h-1zM1279 527h1v1h-1zM1279 531h1v1h-1zM1279 536h1v1h-1zM1279 541h1v1h-1zM1279 545h1v1h-1zM1279 550h1v1h-1zM1279 554h1v1h-1zM1279 559h1v1h-1zM1279 564h1v1h-1zM1279 568h1v1h-1zM1279 573h1v1h-1zM1279 578h1v1h-1zM1279 582h1v1h-1zM1279 587h1v1h-1zM1279 592h1v1h-1zM1279 596h1v1h-1zM1279 601h1v1h-1zM1279 606h1v1h-1zM1279 610h1v1h-1zM1279 615h1v1h-1zM1279 620h1v1h-1zM1279 624h1v1h-1zM1279 629h1v1h-1zM1279 634h1v1h-1zM1279 638h1v1h-1zM1279 643h1v1h-1zM1279 648h1v1h-1zM1279 652h1v1h-1zM1279 657h1v1h-1zM1279 662h1v1h-1zM1279 666h1v1h-1zM1279 671h1v1h-1zM1279 675h1v1h-1zM1279 680h1v1h-1zM1279 685h1v1h-1zM1279 689h1v1h-1zM1279 694h1v1h-1zM1279 699h1v1h-1zM1279 703h1v1h-1zM1279 708h1v1h-1zM1279 713h1v1h-1zM1279 717h1v1h-1zM1279 722h1v1h-1zM1279 727h1v1h-1zM1279 731h1v1h-1zM1279 736h1v1h-1zM1279 741h1v1h-1zM1279 745h1v1h-1zM1279 750h1v1h-1zM1279 755h1v1h-1zM1279 759h1v1h-1zM1279 764h1v1h-1zM1279 769h1v1h-1zM1279 773h1v1h-1zM1279 778h1v1h-1zM1279 783h1v1h-1zM1279 787h1v1h-1zM1279 792h1v1h-1zM1279 796h1v1h-1zM1279 801h1v1h-1zM1279 806h1v1h-1zM1279 810h1v1h-1zM1279 815h1v1h-1zM1279 820h1v1h-1zM1279 824h1v1h-1zM1279 829h1v1h-1zM1279 834h1v1h-1zM1279 838h1v1h-1zM1279 843h1v1h-1zM1279 848h1v1h-1zM1279 852h1v1h-1zM1279 857h1v1h-1zM1279 862h1v1h-1zM1279 866h1v1h-1zM1279 871h1v1h-1zM1279 876h1v1h-1zM1279 880h1v1h-1zM1279 885h1v1h-1zM1279 890h1v1h-1zM1279 894h1v1h-1zM1279 899h1v1h-1zM1279 904h1v1h-1zM1279 908h1v1h-1zM1279 913h1v1h-1zM1279 917h1v1h-1zM1279 922h1v1h-1zM1279 927h1v1h-1zM1279 931h1v1h-1zM1279 936h1v1h-1zM1279 941h1v1h-1zM1279 945h1v1h-1zM1279 950h1v1h-1zM1279 955h1v1h-1zM1279 959h1v1h-1zM1279 964h1v1h-1zM1279 969h1v1h-1zM1279 973h1v1h-1zM1279 978h1v1h-1zM1279 983h1v1h-1zM1279 987h1v1h-1zM1454 57h1v1h-1zM1454 61h1v1h-1zM1454 66h1v1h-1zM1454 70h1v1h-1zM1454 75h1v1h-1zM1454 80h1v1h-1zM1454 84h1v1h-1zM1454 89h1v1h-1zM1454 94h1v1h-1zM1454 98h1v1h-1zM1454 103h1v1h-1zM1454 108h1v1h-1zM1454 112h1v1h-1zM1454 117h1v1h-1zM1454 122h1v1h-1zM1454 126h1v1h-1zM1454 131h1v1h-1zM1454 136h1v1h-1zM1454 140h1v1h-1zM1454 145h1v1h-1zM1454 150h1v1h-1zM1454 154h1v1h-1zM1454 159h1v1h-1zM1454 164h1v1h-1zM1454 168h1v1h-1zM1454 173h1v1h-1zM1454 178h1v1h-1zM1454 182h1v1h-1zM1454 187h1v1h-1zM1454 191h1v1h-1zM1454 196h1v1h-1zM1454 201h1v1h-1zM1454 205h1v1h-1zM1454 210h1v1h-1zM1454 215h1v1h-1zM1454 219h1v1h-1zM1454 224h1v1h-1zM1454 229h1v1h-1zM1454 233h1v1h-1zM1454 238h1v1h-1zM1454 243h1v1h-1zM1454 247h1v1h-1zM1454 252h1v1h-1zM1454 257h1v1h-1zM1454 261h1v1h-1zM1454 266h1v1h-1zM1454 271h1v1h-1zM1454 275h1v1h-1zM1454 280h1v1h-1zM1454 285h1v1h-1zM1454 289h1v1h-1zM1454 294h1v1h-1zM1454 299h1v1h-1zM1454 303h1v1h-1zM1454 308h1v1h-1zM1454 312h1v1h-1zM1454 317h1v1h-1zM1454 322h1v1h-1zM1454 326h1v1h-1zM1454 331h1v1h-1zM1454 336h1v1h-1zM1454 340h1v1h-1zM1454 345h1v1h-1zM1454 350h1v1h-1zM1454 354h1v1h-1zM1454 359h1v1h-1zM1454 364h1v1h-1zM1454 368h1v1h-1zM1454 373h1v1h-1zM1454 378h1v1h-1zM1454 382h1v1h-1zM1454 387h1v1h-1zM1454 392h1v1h-1zM1454 396h1v1h-1zM1454 401h1v1h-1zM1454 406h1v1h-1zM1454 410h1v1h-1zM1454 415h1v1h-1zM1454 420h1v1h-1zM1454 424h1v1h-1zM1454 429h1v1h-1zM1454 433h1v1h-1zM1454 438h1v1h-1zM1454 443h1v1h-1zM1454 447h1v1h-1zM1454 452h1v1h-1zM1454 457h1v1h-1zM1454 461h1v1h-1zM1454 466h1v1h-1zM1454 471h1v1h-1zM1454 475h1v1h-1zM1454 480h1v1h-1zM1454 485h1v1h-1zM1454 489h1v1h-1zM1454 494h1v1h-1zM1454 499h1v1h-1zM1454 503h1v1h-1zM1454 508h1v1h-1zM1454 513h1v1h-1zM1454 517h1v1h-1zM1454 522h1v1h-1zM1454 527h1v1h-1zM1454 531h1v1h-1zM1454 536h1v1h-1zM1454 541h1v1h-1zM1454 545h1v1h-1zM1454 550h1v1h-1zM1454 554h1v1h-1zM1454 559h1v1h-1zM1454 564h1v1h-1zM1454 568h1v1h-1zM1454 573h1v1h-1zM1454 578h1v1h-1zM1454 582h1v1h-1zM1454 587h1v1h-1zM1454 592h1v1h-1zM1454 596h1v1h-1zM1454 601h1v1h-1zM1454 606h1v1h-1zM1454 610h1v1h-1zM1454 615h1v1h-1zM1454 620h1v1h-1zM1454 624h1v1h-1zM1454 629h1v1h-1zM1454 634h1v1h-1zM1454 638h1v1h-1zM1454 643h1v1h-1zM1454 648h1v1h-1zM1454 652h1v1h-1zM1454 657h1v1h-1zM1454 662h1v1h-1zM1454 666h1v1h-1zM1454 671h1v1h-1zM1454 675h1v1h-1zM1454 680h1v1h-1zM1454 685h1v1h-1zM1454 689h1v1h-1zM1454 694h1v1h-1zM1454 699h1v1h-1zM1454 703h1v1h-1zM1454 708h1v1h-1zM1454 713h1v1h-1zM1454 717h1v1h-1zM1454 722h1v1h-1zM1454 727h1v1h-1zM1454 731h1v1h-1zM1454 736h1v1h-1zM1454 741h1v1h-1zM1454 745h1v1h-1zM1454 750h1v1h-1zM1454 755h1v1h-1zM1454 759h1v1h-1zM1454 764h1v1h-1zM1454 769h1v1h-1zM1454 773h1v1h-1zM1454 778h1v1h-1zM1454 783h1v1h-1zM1454 787h1v1h-1zM1454 792h1v1h-1zM1454 796h1v1h-1zM1454 801h1v1h-1zM1454 806h1v1h-1zM1454 810h1v1h-1zM1454 815h1v1h-1zM1454 820h1v1h-1zM1454 824h1v1h-1zM1454 829h1v1h-1zM1454 834h1v1h-1zM1454 838h1v1h-1zM1454 843h1v1h-1zM1454 848h1v1h-1zM1454 852h1v1h-1zM1454 857h1v1h-1zM1454 862h1v1h-1zM1454 866h1v1h-1zM1454 871h1v1h-1zM1454 876h1v1h-1zM1454 880h1v1h-1zM1454 885h1v1h-1zM1454 890h1v1h-1zM1454 894h1v1h-1zM1454 899h1v1h-1zM1454 904h1v1h-1zM1454 908h1v1h-1zM1454 913h1v1h-1zM1454 917h1v1h-1zM1454 922h1v1h-1zM1454 927h1v1h-1zM1454 931h1v1h-1zM1454 936h1v1h-1zM1454 941h1v1h-1zM1454 945h1v1h-1zM1454 950h1v1h-1zM1454 955h1v1h-1zM1454 959h1v1h-1zM1454 964h1v1h-1zM1454 969h1v1h-1zM1454 973h1v1h-1zM1454 978h1v1h-1zM1454 983h1v1h-1zM1454 987h1v1h-1zM1629 57h1v1h-1zM1629 61h1v1h-1zM1629 66h1v1h-1zM1629 70h1v1h-1zM1629 75h1v1h-1zM1629 80h1v1h-1zM1629 84h1v1h-1zM1629 89h1v1h-1zM1629 94h1v1h-1zM1629 98h1v1h-1zM1629 103h1v1h-1zM1629 108h1v1h-1zM1629 112h1v1h-1zM1629 117h1v1h-1zM1629 122h1v1h-1zM1629 126h1v1h-1zM1629 131h1v1h-1zM1629 136h1v1h-1zM1629 140h1v1h-1zM1629 145h1v1h-1zM1629 150h1v1h-1zM1629 154h1v1h-1zM1629 159h1v1h-1zM1629 164h1v1h-1zM1629 168h1v1h-1zM1629 173h1v1h-1zM1629 178h1v1h-1zM1629 182h1v1h-1zM1629 187h1v1h-1zM1629 191h1v1h-1zM1629 196h1v1h-1zM1629 201h1v1h-1zM1629 205h1v1h-1zM1629 210h1v1h-1zM1629 215h1v1h-1zM1629 219h1v1h-1zM1629 224h1v1h-1zM1629 229h1v1h-1zM1629 233h1v1h-1zM1629 238h1v1h-1zM1629 243h1v1h-1zM1629 247h1v1h-1zM1629 252h1v1h-1zM1629 257h1v1h-1zM1629 261h1v1h-1zM1629 266h1v1h-1zM1629 271h1v1h-1zM1629 275h1v1h-1zM1629 280h1v1h-1zM1629 285h1v1h-1zM1629 289h1v1h-1zM1629 294h1v1h-1zM1629 299h1v1h-1zM1629 303h1v1h-1zM1629 308h1v1h-1zM1629 312h1v1h-1zM1629 317h1v1h-1zM1629 322h1v1h-1zM1629 326h1v1h-1zM1629 331h1v1h-1zM1629 336h1v1h-1zM1629 340h1v1h-1zM1629 345h1v1h-1zM1629 350h1v1h-1zM1629 354h1v1h-1zM1629 359h1v1h-1zM1629 364h1v1h-1zM1629 368h1v1h-1zM1629 373h1v1h-1zM1629 378h1v1h-1zM1629 382h1v1h-1zM1629 387h1v1h-1zM1629 392h1v1h-1zM1629 396h1v1h-1zM1629 401h1v1h-1zM1629 406h1v1h-1zM1629 410h1v1h-1zM1629 415h1v1h-1zM1629 420h1v1h-1zM1629 424h1v1h-1zM1629 429h1v1h-1zM1629 433h1v1h-1zM1629 438h1v1h-1zM1629 443h1v1h-1zM1629 447h1v1h-1zM1629 452h1v1h-1zM1629 457h1v1h-1zM1629 461h1v1h-1zM1629 466h1v1h-1zM1629 471h1v1h-1zM1629 475h1v1h-1zM1629 480h1v1h-1zM1629 485h1v1h-1zM1629 489h1v1h-1zM1629 494h1v1h-1zM1629 499h1v1h-1zM1629 503h1v1h-1zM1629 508h1v1h-1zM1629 513h1v1h-1zM1629 517h1v1h-1zM1629 522h1v1h-1zM1629 527h1v1h-1zM1629 531h1v1h-1zM1629 536h1v1h-1zM1629 541h1v1h-1zM1629 545h1v1h-1zM1629 550h1v1h-1zM1629 554h1v1h-1zM1629 559h1v1h-1zM1629 564h1v1h-1zM1629 568h1v1h-1zM1629 573h1v1h-1zM1629 578h1v1h-1zM1629 582h1v1h-1zM1629 587h1v1h-1zM1629 592h1v1h-1zM1629 596h1v1h-1zM1629 601h1v1h-1zM1629 606h1v1h-1zM1629 610h1v1h-1zM1629 615h1v1h-1zM1629 620h1v1h-1zM1629 624h1v1h-1zM1629 629h1v1h-1zM1629 634h1v1h-1zM1629 638h1v1h-1zM1629 643h1v1h-1zM1629 648h1v1h-1zM1629 652h1v1h-1zM1629 657h1v1h-1zM1629 662h1v1h-1zM1629 666h1v1h-1zM1629 671h1v1h-1zM1629 675h1v1h-1zM1629 680h1v1h-1zM1629 685h1v1h-1zM1629 689h1v1h-1zM1629 694h1v1h-1zM1629 699h1v1h-1zM1629 703h1v1h-1zM1629 708h1v1h-1zM1629 713h1v1h-1zM1629 717h1v1h-1zM1629 722h1v1h-1zM1629 727h1v1h-1zM1629 731h1v1h-1zM1629 736h1v1h-1zM1629 741h1v1h-1zM1629 745h1v1h-1zM1629 750h1v1h-1zM1629 755h1v1h-1zM1629 759h1v1h-1zM1629 764h1v1h-1zM1629 769h1v1h-1zM1629 773h1v1h-1zM1629 778h1v1h-1zM1629 783h1v1h-1zM1629 787h1v1h-1zM1629 792h1v1h-1zM1629 796h1v1h-1zM1629 801h1v1h-1zM1629 806h1v1h-1zM1629 810h1v1h-1zM1629 815h1v1h-1zM1629 820h1v1h-1zM1629 824h1v1h-1zM1629 829h1v1h-1zM1629 834h1v1h-1zM1629 838h1v1h-1zM1629 843h1v1h-1zM1629 848h1v1h-1zM1629 852h1v1h-1zM1629 857h1v1h-1zM1629 862h1v1h-1zM1629 866h1v1h-1zM1629 871h1v1h-1zM1629 876h1v1h-1zM1629 880h1v1h-1zM1629 885h1v1h-1zM1629 890h1v1h-1zM1629 894h1v1h-1zM1629 899h1v1h-1zM1629 904h1v1h-1zM1629 908h1v1h-1zM1629 913h1v1h-1zM1629 917h1v1h-1zM1629 922h1v1h-1zM1629 927h1v1h-1zM1629 931h1v1h-1zM1629 936h1v1h-1zM1629 941h1v1h-1zM1629 945h1v1h-1zM1629 950h1v1h-1zM1629 955h1v1h-1zM1629 959h1v1h-1zM1629 964h1v1h-1zM1629 969h1v1h-1zM1629 973h1v1h-1zM1629 978h1v1h-1zM1629 983h1v1h-1zM1629 987h1v1h-1z" fill="#a8a8a8"/>
</svg>
<div class="vl" style="top:15.3px;color:#eee11e">40 V</div><div class="vl" style="top:38.4px;color:#eee11e">35 V</div><div class="vl" style="top:61.5px;color:#eee11e">30 V</div><div class="vl" style="top:84.7px;color:#eee11e">25 V</div><div class="vl" style="top:107.8px;color:#eee11e">20 V</div><div class="vl" style="top:130.9px;color:#eee11e">15 V</div><div class="vl" style="top:154.1px;color:#eee11e">10 V</div><div class="vl" style="top:177.2px;color:#eee11e">5 V</div><div class="vl" style="top:200.3px;color:#eee11e">0 V</div><div class="vl" style="top:249.7px;color:#8cc43c">1 V</div><div class="vl" style="top:272.8px;color:#8cc43c">800 mV</div><div class="vl" style="top:295.9px;color:#8cc43c">600 mV</div><div class="vl" style="top:319.0px;color:#8cc43c">400 mV</div><div class="vl" style="top:342.1px;color:#8cc43c">200 mV</div><div class="vl" style="top:365.2px;color:#8cc43c">0 V</div><div class="vl" style="top:388.3px;color:#8cc43c">-200 mV</div><div class="vl" style="top:411.4px;color:#8cc43c">-400 mV</div><div class="vl" style="top:434.5px;color:#8cc43c">-600 mV</div><div class="vl" style="top:483.7px;color:#f0901e">529.605 mT</div><div class="vl" style="top:506.8px;color:#f0901e">463.404 mT</div><div class="vl" style="top:529.9px;color:#f0901e">397.203 mT</div><div class="vl" style="top:553.0px;color:#f0901e">331.003 mT</div><div class="vl" style="top:576.1px;color:#f0901e">264.802 mT</div><div class="vl" style="top:599.2px;color:#f0901e">198.602 mT</div><div class="vl" style="top:622.4px;color:#f0901e">132.401 mT</div><div class="vl" style="top:645.5px;color:#f0901e">66.201 mT</div><div class="vl" style="top:668.6px;color:#f0901e">0 T</div><div class="vl" style="top:712.8px;color:#7a3a92">150.581 A</div><div class="vl" style="top:736.1px;color:#7a3a92">75.291 A</div><div class="vl" style="top:759.4px;color:#7a3a92">0 A</div><div class="vl" style="top:782.7px;color:#7a3a92">-75.291 A</div><div class="vl" style="top:806.0px;color:#7a3a92">-150.581 A</div><div class="vl" style="top:829.3px;color:#7a3a92">-225.872 A</div><div class="vl" style="top:852.6px;color:#7a3a92">-301.163 A</div><div class="vl" style="top:875.9px;color:#7a3a92">-376.453 A</div><div class="vl" style="top:899.2px;color:#7a3a92">-451.744 A</div>
<div class="abs" style="left:50px;top:754px;font-size:19px;letter-spacing:0.5px;color:#7b3596;line-height:24px">I_p</div>
<svg width="1748" height="935" viewBox="3 57 1748 935">
<line x1="3" y1="266.5" x2="1718" y2="266.5" stroke="#c8c8c8" stroke-width="1.3" stroke-dasharray="5 5"/><line x1="3" y1="430.3" x2="1718" y2="430.3" stroke="#c8c8c8" stroke-width="1.3" stroke-dasharray="5 5"/><line x1="3" y1="734.1" x2="1718" y2="734.1" stroke="#c8c8c8" stroke-width="1.3" stroke-dasharray="5 5"/><line x1="3" y1="824.3" x2="1718" y2="824.3" stroke="#c8c8c8" stroke-width="1.3" stroke-dasharray="5 5"/><line x1="55.5" y1="95" x2="55.5" y2="992" stroke="#c8c8c8" stroke-width="1.3" stroke-dasharray="4.6 5.4"/><path d="M3.0 264.6L55.0 264.6L57.0 261.0L58.0 266.0L60.0 263.0L62.0 265.0L64.0 263.5L70.0 265.0L642.3 264.4L642.3 259.6L642.3 259.6L644.4 255.2L646.7 251.5L650.4 248.6L653.7 244.2L656.3 241.6L658.9 239.5L661.5 237.4L663.5 235.8L665.5 234.3L667.6 232.9L669.6 231.5L672.1 229.8L674.5 228.3L677.0 226.7L679.5 225.2L681.9 223.7L684.4 222.2L686.6 220.9L688.8 219.7L691.1 218.5L693.3 217.4L695.5 216.4L697.8 215.5L700.0 214.6L702.2 213.7L704.7 212.6L707.1 211.4L709.6 210.4L711.7 209.6L713.8 208.9L715.8 208.1L717.9 207.5L720.0 206.8L722.2 206.1L724.5 205.5L726.7 204.9L728.9 204.3L731.1 203.7L733.3 203.0L735.6 202.4L737.8 201.8L740.0 201.3L742.2 200.8L744.5 200.4L746.7 200.0L748.9 199.5L751.1 199.1L753.4 198.7L755.6 198.3L757.6 197.9L759.7 197.4L761.7 197.0L763.8 196.6L765.8 196.2L767.9 195.8L770.0 195.5L772.0 195.1L774.1 194.7L776.2 194.4L778.3 194.0L780.4 193.7L782.5 193.4L784.5 193.1L786.6 192.8L788.7 192.5L790.8 192.3L792.9 192.1L795.0 191.9L797.0 191.6L799.1 191.4L801.2 191.2L803.3 191.0L805.4 190.8L807.5 190.6L809.5 190.5L811.6 190.3L813.7 190.1L815.8 190.0L817.9 189.8L820.0 189.7L822.0 189.6L824.1 189.4L826.2 189.3L828.3 189.2L830.4 189.1L832.5 189.0L834.6 188.9L836.6 188.8L838.7 188.7L840.8 188.6L842.9 188.5L845.0 188.4L847.1 188.3L849.1 188.2L851.2 188.2L853.3 188.1L855.4 188.0L857.5 188.0L859.6 187.9L861.7 187.8L863.7 187.8L865.8 187.8L867.9 187.7L870.0 187.7L872.0 187.7L874.0 187.7L876.0 187.6L878.1 187.6L880.1 187.6L882.1 187.6L884.1 187.6L886.1 187.5L888.1 187.5L890.2 187.5L892.2 187.5L894.2 187.5L896.2 187.4L898.2 187.4L900.2 187.4L902.3 187.4L904.3 187.4L906.3 187.4L908.3 187.4L910.3 187.4L912.3 187.3L914.4 187.3L916.4 187.3L918.4 187.3L920.4 187.3L922.4 187.3L924.4 187.3L926.5 187.3L928.5 187.3L930.5 187.3L932.5 187.3L934.5 187.3L936.5 187.3L938.5 187.3L940.6 187.3L942.6 187.4L944.6 187.4L946.6 187.4L948.6 187.4L950.6 187.5L952.7 187.5L954.7 187.6L956.7 187.6L958.7 187.7L960.7 187.7L962.7 187.8L964.8 187.8L966.8 187.9L968.8 187.9L970.8 188.0L972.8 188.0L974.8 188.1L976.9 188.2L978.9 188.2L980.9 188.3L982.9 188.4L984.9 188.4L986.9 188.5L989.0 188.6L991.0 188.6L993.0 188.7L995.0 188.8L997.0 188.8L999.1 188.9L1001.1 189.0L1003.1 189.0L1005.2 189.1L1007.2 189.2L1009.2 189.3L1011.2 189.3L1013.3 189.4L1015.3 189.5L1017.3 189.6L1019.4 189.7L1021.4 189.8L1023.4 189.9L1025.5 190.0L1027.5 190.1L1029.5 190.2L1031.5 190.3L1033.6 190.4L1035.6 190.5L1037.6 190.6L1039.7 190.7L1041.7 190.8L1043.8 190.9L1045.9 191.0L1047.9 191.1L1050.0 191.3L1052.1 191.4L1054.2 191.5L1056.3 191.6L1058.3 191.8L1060.4 191.9L1062.5 192.0L1064.6 192.2L1066.7 192.3L1068.7 192.5L1070.8 192.6L1072.9 192.8L1075.0 192.9L1077.1 193.0L1079.1 193.2L1081.2 193.3L1083.3 193.5L1085.4 193.7L1087.5 193.8L1089.6 194.0L1091.6 194.1L1093.7 194.3L1095.8 194.4L1097.9 194.6L1100.0 194.8L1102.1 194.9L1104.2 195.1L1106.2 195.3L1108.3 195.5L1110.4 195.6L1112.5 195.8L1114.6 196.0L1116.7 196.2L1118.7 196.4L1120.8 196.6L1122.9 196.8L1125.0 197.0L1127.1 197.2L1129.2 197.4L1131.3 197.7L1133.3 197.9L1135.4 198.1L1137.5 198.4L1139.6 198.6L1141.7 198.9L1143.8 199.1L1145.8 199.4L1147.9 199.7L1150.0 200.0L1152.1 200.2L1154.2 200.5L1156.3 200.8L1158.4 201.1L1160.4 201.4L1162.5 201.7L1164.6 202.0L1166.7 202.3L1168.8 202.6L1170.9 202.9L1172.9 203.3L1175.0 203.6L1177.1 203.9L1179.2 204.3L1181.3 204.6L1183.3 205.0L1185.4 205.3L1187.5 205.7L1189.6 206.1L1191.7 206.4L1193.7 206.8L1195.8 207.2L1197.9 207.6L1200.0 208.0L1202.1 208.4L1204.1 208.8L1206.2 209.2L1208.3 209.6L1210.4 210.0L1212.5 210.4L1214.6 210.9L1216.6 211.3L1218.7 211.7L1220.8 212.2L1222.9 212.6L1225.0 213.1L1227.1 213.5L1229.2 214.0L1231.2 214.5L1233.3 215.0L1235.4 215.4L1237.5 215.9L1239.6 216.4L1241.7 216.9L1243.7 217.4L1245.8 218.0L1247.9 218.5L1250.0 219.0L1252.1 219.5L1254.1 220.1L1256.2 220.7L1258.3 221.3L1260.4 221.9L1262.4 222.5L1264.5 223.1L1266.6 223.7L1268.6 224.3L1270.7 225.0L1272.8 225.6L1274.9 226.2L1276.9 226.7L1279.0 227.3L1281.1 227.9L1283.2 228.4L1285.3 229.0L1287.4 229.5L1289.5 230.1L1291.6 230.6L1293.7 231.2L1295.8 231.7L1297.8 232.2L1299.9 232.7L1302.0 233.2L1304.1 233.7L1306.2 234.2L1308.3 234.7L1310.4 235.2L1312.5 235.6L1314.6 236.0L1316.7 236.5L1318.7 236.9L1320.8 237.3L1322.9 237.7L1325.0 238.2L1327.0 238.6L1329.1 239.0L1331.2 239.4L1333.2 239.8L1335.3 240.2L1337.4 240.5L1339.5 240.9L1341.5 241.2L1343.6 241.6L1345.7 241.9L1347.8 242.2L1349.8 242.5L1351.9 242.8L1354.0 243.0L1356.0 243.2L1358.0 243.4L1360.0 243.6L1362.0 243.8L1364.0 244.0L1366.0 244.2L1368.0 244.4L1370.0 244.5L1372.0 244.7L1374.0 244.9L1376.0 245.0L1378.0 245.2L1380.0 245.3L1382.0 245.4L1384.1 245.6L1386.1 245.7L1388.2 245.9L1390.2 246.0L1392.2 246.2L1394.3 246.3L1396.3 246.4L1398.4 246.6L1400.4 246.7L1402.4 246.8L1404.5 246.9L1406.5 247.1L1408.6 247.2L1410.6 247.3L1412.6 247.4L1414.7 247.6L1416.7 247.7L1418.7 247.8L1420.8 247.9L1422.8 248.0L1424.9 248.1L1426.9 248.2L1428.9 248.3L1431.0 248.4L1433.0 248.5L1435.1 248.6L1437.1 248.7L1439.1 248.8L1441.2 248.9L1443.2 249.0L1445.3 249.0L1447.3 249.1L1449.3 249.2L1451.4 249.2L1453.4 249.3L1455.4 249.4L1457.5 249.4L1459.5 249.5L1461.6 249.6L1463.6 249.6L1465.6 249.7L1467.7 249.7L1469.7 249.8L1471.7 249.8L1473.8 249.9L1475.8 249.9L1477.9 250.0L1479.9 250.0L1481.9 250.1L1484.0 250.1L1486.0 250.2L1488.0 250.2L1490.1 250.3L1492.1 250.3L1494.2 250.4L1496.2 250.4L1498.2 250.5L1500.3 250.5L1502.3 250.5L1504.3 250.6L1506.4 250.6L1508.4 250.7L1510.5 250.7L1512.5 250.8L1514.5 250.8L1516.6 250.9L1518.6 250.9L1520.6 250.9L1522.6 251.0L1524.7 251.0L1526.7 251.1L1528.7 251.1L1530.7 251.2L1532.7 251.2L1534.8 251.3L1536.8 251.3L1538.8 251.3L1540.8 251.4L1542.8 251.4L1544.9 251.5L1546.9 251.5L1548.9 251.6L1550.9 251.6L1552.9 251.7L1555.0 251.7L1557.0 251.7L1559.0 251.8L1561.0 251.8L1563.0 251.9L1565.1 251.9L1567.1 251.9L1569.1 252.0L1571.1 252.0L1573.2 252.1L1575.2 252.1L1577.2 252.1L1579.2 252.2L1581.2 252.2L1583.3 252.3L1585.3 252.3L1587.3 252.3L1589.3 252.4L1591.3 252.4L1593.4 252.5L1595.4 252.5L1597.4 252.5L1599.4 252.6L1601.4 252.6L1603.5 252.6L1605.5 252.7L1607.5 252.7L1609.5 252.8L1611.5 252.8L1613.6 252.8L1615.6 252.9L1617.6 252.9L1619.6 252.9L1621.6 253.0L1623.7 253.0L1625.7 253.0L1627.7 253.1L1629.7 253.1L1631.7 253.1L1633.8 253.2L1635.8 253.2L1637.8 253.2L1639.8 253.3L1641.9 253.3L1643.9 253.3L1645.9 253.4L1647.9 253.4L1649.9 253.4L1652.0 253.5L1654.0 253.5L1656.0 253.5L1658.0 253.6L1660.0 253.6L1662.1 253.6L1664.1 253.6L1666.1 253.7L1668.1 253.7L1670.2 253.7L1672.2 253.8L1674.2 253.8L1676.2 253.8L1678.2 253.9L1680.3 253.9L1682.3 253.9L1684.3 253.9L1686.3 254.0L1688.3 254.0L1690.4 254.0L1692.4 254.1L1694.4 254.1L1696.4 254.1L1698.4 254.1L1700.5 254.2L1702.5 254.2L1704.5 254.2L1706.5 254.3L1708.6 254.3L1710.6 254.3L1712.6 254.3L1714.6 254.4L1716.6 254.4L1718.7 254.4L1720.7 254.5L1722.7 254.5L1724.7 254.5L1726.7 254.5L1728.8 254.6L1730.8 254.6L1732.8 254.6L1734.8 254.7L1736.9 254.7L1738.9 254.7L1740.9 254.8L1742.9 254.8L1744.9 254.8L1747.0 254.8L1749.0 254.9L1751.0 254.9" fill="none" stroke="#eee11e" stroke-width="1.3"/><path d="M3.0 429.4L1751.0 429.4" fill="none" stroke="#8cc43c" stroke-width="1.2"/><path d="M3 733.7L55 733.7L65.0 730.6L68.0 729.8L71.0 729.1L74.0 728.3L77.0 727.6L80.0 726.8L83.0 726.0L86.0 725.3L89.0 724.5L92.0 723.7L95.0 723.0L98.0 722.2L101.0 721.4L104.0 720.7L107.0 719.9L110.0 719.2L113.0 718.5L116.0 717.7L119.0 717.0L122.0 716.3L125.0 715.6L128.1 714.9L131.1 714.2L134.2 713.5L137.3 712.8L140.3 712.1L143.4 711.4L146.5 710.8L149.5 710.1L152.6 709.4L155.6 708.8L158.7 708.1L161.8 707.4L164.8 706.8L167.9 706.1L171.0 705.5L174.0 704.8L177.1 704.2L180.2 703.6L183.2 702.9L186.3 702.3L189.4 701.6L192.4 701.0L195.5 700.4L198.6 699.8L201.6 699.1L204.7 698.5L207.7 697.9L210.8 697.3L213.9 696.7L216.9 696.1L220.0 695.4L223.1 694.8L226.1 694.2L229.2 693.6L232.2 693.0L235.3 692.4L238.3 691.8L241.4 691.2L244.4 690.6L247.4 690.0L250.5 689.4L253.5 688.8L256.6 688.2L259.6 687.6L262.7 687.0L265.7 686.5L268.7 685.9L271.8 685.3L274.8 684.7L277.9 684.1L280.9 683.5L283.9 683.0L287.0 682.4L290.0 681.8L293.1 681.2L296.1 680.7L299.2 680.1L302.2 679.5L305.2 679.0L308.3 678.4L311.3 677.8L314.4 677.3L317.4 676.7L320.4 676.1L323.5 675.6L326.5 675.0L329.6 674.4L332.6 673.9L335.6 673.3L338.7 672.8L341.7 672.2L344.8 671.7L347.8 671.1L350.9 670.5L353.9 670.0L356.9 669.4L360.0 668.9L363.0 668.3L366.1 667.8L369.1 667.2L372.1 666.7L375.2 666.1L378.2 665.6L381.3 665.0L384.3 664.5L387.4 663.9L390.4 663.4L393.4 662.8L396.5 662.3L399.5 661.7L402.6 661.2L405.6 660.6L408.6 660.1L411.6 659.5L414.6 659.0L417.6 658.4L420.6 657.9L423.6 657.3L426.6 656.8L429.6 656.2L432.6 655.7L435.6 655.2L438.6 654.6L441.6 654.1L444.6 653.5L447.6 653.0L450.7 652.4L453.7 651.9L456.7 651.4L459.7 650.8L462.7 650.3L465.7 649.7L468.7 649.2L471.7 648.6L474.7 648.1L477.7 647.6L480.7 647.0L483.7 646.5L486.7 646.0L489.7 645.4L492.7 644.9L495.7 644.4L498.7 643.8L501.7 643.3L504.7 642.8L507.7 642.2L510.7 641.7L513.7 641.2L516.7 640.7L519.7 640.1L522.7 639.6L525.7 639.1L528.7 638.6L531.7 638.1L534.7 637.5L537.8 637.0L540.8 636.5L543.8 636.0L546.8 635.5L549.8 635.0L552.8 634.5L555.8 634.0L558.8 633.5L561.8 633.0L564.8 632.5L567.8 632.0L570.8 631.5L573.8 631.0L576.8 630.5L579.8 630.0L582.8 629.5L585.9 629.0L588.9 628.5L592.0 628.0L595.0 627.5L598.1 627.0L601.1 626.5L604.1 626.1L607.2 625.6L610.2 625.1L613.3 624.6L616.3 624.1L619.4 623.6L622.4 623.1L625.4 622.6L628.5 622.2L631.5 621.7L634.6 621.2L637.6 620.7L640.7 620.2L643.7 619.7L646.7 619.3L649.8 618.8L652.8 618.3L655.9 617.8L658.9 617.4L662.0 616.9L665.0 616.4L668.0 616.0L671.1 615.5L674.1 615.0L677.2 614.6L680.2 614.1L683.3 613.7L686.3 613.2L689.4 612.7L692.4 612.3L695.4 611.8L698.5 611.4L701.5 610.9L704.6 610.5L707.6 610.1L710.7 609.6L713.7 609.2L716.7 608.7L719.8 608.3L722.8 607.9L725.9 607.4L728.9 607.0L732.0 606.6L735.0 606.2L738.0 605.8L741.1 605.3L744.1 604.9L747.2 604.5L750.2 604.1L753.3 603.7L756.3 603.3L759.3 602.9L762.3 602.5L765.4 602.1L768.4 601.7L771.4 601.3L774.4 601.0L777.4 600.6L780.4 600.2L783.5 599.8L786.5 599.4L789.5 599.1L792.5 598.7L795.5 598.3L798.5 597.9L801.6 597.6L804.6 597.2L807.6 596.8L810.6 596.5L813.6 596.1L816.6 595.8L819.7 595.4L822.7 595.0L825.7 594.7L828.7 594.3L831.7 594.0L834.7 593.6L837.8 593.3L840.8 593.0L843.8 592.6L846.8 592.3L849.8 591.9L852.8 591.6L855.9 591.3L858.9 591.0L861.9 590.6L864.9 590.3L867.9 590.0L870.9 589.7L874.0 589.3L877.0 589.0L880.0 588.7L883.0 588.4L886.1 588.1L889.1 587.8L892.1 587.5L895.2 587.2L898.2 586.8L901.2 586.6L904.3 586.3L907.3 586.0L910.4 585.7L913.4 585.4L916.4 585.1L919.5 584.8L922.5 584.5L925.5 584.2L928.6 583.9L931.6 583.7L934.6 583.4L937.7 583.1L940.7 582.8L943.8 582.6L946.8 582.3L949.8 582.0L952.9 581.7L955.9 581.5L958.9 581.2L962.0 580.9L965.0 580.6L968.0 580.4L971.1 580.1L974.1 579.8L977.1 579.5L980.2 579.3L983.2 579.0L986.2 578.7L989.3 578.5L992.3 578.2L995.4 577.9L998.4 577.6L1001.4 577.4L1004.5 577.1L1007.5 576.8L1010.6 576.5L1013.6 576.2L1016.7 576.0L1019.7 575.7L1022.8 575.4L1025.8 575.1L1028.9 574.8L1031.9 574.5L1035.0 574.2L1038.1 573.9L1041.1 573.6L1044.2 573.3L1047.2 573.0L1050.3 572.7L1053.3 572.5L1056.4 572.2L1059.4 571.9L1062.5 571.6L1065.6 571.3L1068.6 571.0L1071.7 570.7L1074.7 570.4L1077.8 570.1L1080.8 569.8L1083.9 569.6L1086.9 569.3L1090.0 569.0L1093.1 568.7L1096.1 568.4L1099.2 568.2L1102.2 567.9L1105.3 567.6L1108.3 567.3L1111.4 567.1L1114.4 566.8L1117.5 566.6L1120.6 566.3L1123.6 566.1L1126.7 565.8L1129.7 565.6L1132.8 565.3L1135.8 565.1L1138.9 564.9L1141.9 564.6L1145.0 564.4L1148.1 564.2L1151.1 564.0L1154.2 563.7L1157.2 563.5L1160.3 563.3L1163.3 563.1L1166.4 562.9L1169.4 562.7L1172.5 562.5L1175.6 562.3L1178.6 562.1L1181.7 561.9L1184.7 561.7L1187.8 561.5L1190.8 561.3L1193.9 561.1L1196.9 560.9L1200.0 560.7L1203.1 560.5L1206.1 560.3L1209.2 560.1L1212.2 559.9L1215.3 559.7L1218.3 559.6L1221.4 559.4L1224.4 559.2L1227.5 559.0L1230.6 558.8L1233.6 558.7L1236.7 558.5L1239.7 558.3L1242.8 558.2L1245.8 558.0L1248.9 557.8L1251.9 557.7L1255.0 557.5L1258.1 557.3L1261.1 557.2L1264.2 557.0L1267.2 556.9L1270.3 556.7L1273.3 556.5L1276.4 556.4L1279.4 556.2L1282.5 556.1L1285.6 556.0L1288.6 555.8L1291.7 555.7L1294.7 555.5L1297.8 555.4L1300.8 555.2L1303.9 555.1L1306.9 554.9L1310.0 554.8L1313.1 554.6L1316.1 554.5L1319.2 554.4L1322.2 554.2L1325.3 554.1L1328.3 553.9L1331.4 553.8L1334.4 553.7L1337.5 553.5L1340.6 553.4L1343.6 553.3L1346.7 553.1L1349.7 553.0L1352.8 552.9L1355.8 552.7L1358.9 552.6L1361.9 552.5L1365.0 552.4L1368.1 552.2L1371.1 552.1L1374.2 552.0L1377.2 551.9L1380.3 551.8L1383.3 551.7L1386.4 551.6L1389.4 551.5L1392.5 551.4L1395.6 551.3L1398.6 551.2L1401.7 551.1L1404.7 551.0L1407.8 550.9L1410.8 550.8L1413.9 550.8L1416.9 550.7L1420.0 550.6L1423.1 550.5L1426.1 550.5L1429.2 550.4L1432.2 550.3L1435.3 550.2L1438.3 550.2L1441.4 550.1L1444.4 550.0L1447.5 549.9L1450.6 549.9L1453.6 549.8L1456.7 549.7L1459.7 549.7L1462.8 549.6L1465.8 549.5L1468.9 549.5L1471.9 549.4L1475.0 549.3L1478.1 549.3L1481.1 549.2L1484.2 549.1L1487.2 549.1L1490.3 549.0L1493.3 549.0L1496.4 548.9L1499.4 548.8L1502.5 548.8L1505.6 548.7L1508.6 548.7L1511.7 548.7L1514.7 548.6L1517.8 548.6L1520.8 548.5L1523.9 548.5L1526.9 548.5L1530.0 548.4L1533.1 548.4L1536.1 548.4L1539.2 548.4L1542.2 548.3L1545.3 548.3L1548.3 548.3L1551.4 548.3L1554.4 548.3L1557.5 548.3L1560.6 548.3L1563.6 548.3L1566.7 548.3L1569.7 548.3L1572.8 548.3L1575.8 548.3L1578.9 548.3L1581.9 548.3L1585.0 548.3L1588.1 548.3L1591.1 548.3L1594.2 548.3L1597.2 548.3L1600.3 548.3L1603.3 548.3L1606.4 548.3L1609.4 548.3L1612.5 548.3L1615.6 548.3L1618.6 548.3L1621.7 548.3L1624.7 548.3L1627.8 548.3L1630.8 548.3L1633.9 548.3L1636.9 548.3L1640.0 548.3L1643.1 548.3L1646.1 548.3L1649.2 548.3L1652.2 548.3L1655.3 548.3L1658.3 548.3L1661.4 548.3L1664.4 548.3L1667.5 548.3L1670.6 548.3L1673.7 548.3L1676.8 548.3L1679.9 548.3L1683.0 548.3L1686.1 548.4L1689.1 548.4L1692.2 548.4L1695.3 548.4L1698.4 548.5L1701.5 548.5L1704.6 548.5L1707.7 548.5L1710.8 548.6L1713.9 548.6L1717.0 548.6L1720.1 548.7L1723.2 548.7L1726.3 548.7L1729.4 548.8L1732.4 548.8L1735.5 548.9L1738.6 548.9L1741.7 548.9L1744.8 548.9L1747.9 549.0L1751.0 549.0" fill="none" stroke="#f0901e" stroke-width="1.15"/><path d="M3.0 828.9L4.5 828.7L6.1 829.4L7.6 828.8L9.2 829.4L10.7 829.2L12.2 828.9L13.8 829.5L15.3 829.0L16.9 829.5L18.4 829.2L20.0 829.3L21.5 829.7L23.0 830.3L24.6 829.5L26.1 829.6L27.7 830.2L29.2 830.6L30.8 830.2L32.3 830.1L33.8 830.8L35.4 829.8L36.9 830.8L38.5 830.2L40.0 830.1L41.6 830.1L43.2 830.4L44.8 831.0L46.4 830.3L48.0 830.8L49.6 831.0L51.2 830.7L52.8 831.0L54.4 830.4L56.0 830.5L56.5 804.6L57.0 782.2L57.3 854.9L57.8 811.8L58.3 840.1L59.0 825.9L60.0 835.8L61.0 829.4L62.0 834.2L64.0 829.7L66.0 832.1L68.0 831.0L70.0 830.5L71.5 830.8L73.0 830.7L75.0 832.3L76.9 832.0L78.8 829.9L80.6 827.8L82.5 829.8L84.4 833.0L86.6 829.9L88.8 828.2L90.4 830.6L92.0 832.6L94.0 831.7L96.0 829.8L98.0 831.2L100.0 832.1L101.5 832.0L103.0 831.8L104.5 832.4L106.0 832.6L107.5 832.2L109.1 832.5L110.6 831.9L112.1 832.8L113.6 832.8L115.1 833.3L116.6 833.2L118.2 832.7L119.7 832.9L121.2 833.3L122.7 832.7L124.2 833.3L125.7 833.0L127.2 833.1L128.8 833.1L130.3 834.1L131.8 833.4L133.3 833.6L134.8 833.9L136.3 834.6L137.9 833.8L139.4 834.3L140.9 834.5L142.4 835.0L143.9 835.0L145.4 835.2L146.9 834.6L148.5 834.9L150.0 834.9L151.5 835.6L153.0 835.8L154.5 835.0L156.0 835.1L157.6 835.3L159.1 835.4L160.6 835.8L162.1 836.0L163.6 835.7L165.1 835.5L166.7 836.1L168.2 836.1L169.7 836.5L171.2 837.1L172.7 836.8L174.2 836.7L175.7 837.0L177.3 837.1L178.8 836.5L180.3 837.6L181.8 837.6L183.3 837.8L184.8 837.8L186.4 837.4L187.9 837.5L189.4 837.3L190.9 838.0L192.4 837.4L193.9 837.5L195.4 837.8L197.0 837.8L198.5 838.2L200.0 837.9L201.5 838.0L203.0 838.2L204.5 838.3L206.1 838.7L207.6 838.4L209.1 839.5L210.6 839.3L212.1 838.8L213.6 839.1L215.1 839.3L216.7 839.4L218.2 839.2L219.7 840.2L221.2 840.5L222.7 839.9L224.2 840.1L225.8 839.7L227.3 839.8L228.8 840.2L230.3 840.2L231.8 841.0L233.3 840.3L234.8 840.3L236.3 841.5L237.9 841.1L239.4 840.8L240.9 841.4L242.4 840.9L243.9 841.6L245.4 842.3L246.9 842.2L248.4 842.2L249.9 841.7L251.5 842.0L253.0 841.9L254.5 842.7L256.0 842.5L257.5 843.0L259.0 842.5L260.5 842.5L262.0 843.4L263.5 843.7L265.1 843.6L266.6 843.7L268.1 843.8L269.6 843.9L271.1 843.4L272.6 843.8L274.1 843.8L275.6 843.5L277.1 843.6L278.7 844.0L280.2 844.1L281.7 844.7L283.2 845.2L284.7 844.7L286.2 845.4L287.7 845.6L289.2 845.7L290.7 845.1L292.3 845.0L293.8 845.1L295.3 845.2L296.8 845.3L298.3 846.0L299.8 846.4L301.3 846.5L302.8 846.1L304.3 846.5L305.9 846.8L307.4 846.0L308.9 846.8L310.4 847.3L311.9 847.2L313.4 847.3L314.9 847.1L316.4 846.8L318.0 847.7L319.5 847.3L321.0 847.9L322.5 848.3L324.0 847.7L325.5 847.8L327.0 848.6L328.5 848.4L330.0 847.9L331.6 848.0L333.1 848.1L334.6 849.1L336.1 849.1L337.6 848.5L339.1 849.4L340.6 849.7L342.1 849.4L343.6 849.2L345.2 849.5L346.7 849.2L348.2 849.1L349.7 850.4L351.2 850.1L352.7 850.1L354.2 850.7L355.7 850.2L357.2 850.9L358.8 850.9L360.3 850.3L361.8 850.5L363.3 850.6L364.8 850.7L366.3 851.2L367.8 851.0L369.3 851.3L370.8 851.0L372.4 852.1L373.9 851.5L375.4 851.8L376.9 852.1L378.4 852.6L379.9 852.1L381.4 852.8L382.9 852.4L384.4 852.6L386.0 852.7L387.5 852.2L389.0 852.8L390.5 852.6L392.0 852.5L393.5 853.6L395.0 853.0L396.5 853.5L398.0 853.9L399.6 853.8L401.1 853.6L402.6 854.0L404.1 854.1L405.6 854.5L407.1 853.9L408.6 854.5L410.1 854.3L411.6 854.5L413.2 855.2L414.7 855.0L416.2 855.2L417.7 855.6L419.2 855.9L420.7 855.5L422.2 855.8L423.7 855.8L425.3 856.0L426.8 856.3L428.3 856.1L429.8 856.4L431.3 856.4L432.8 857.1L434.3 857.0L435.8 857.3L437.4 857.5L438.9 856.9L440.4 857.3L441.9 857.9L443.4 857.9L444.9 857.2L446.4 857.4L447.9 857.9L449.5 857.6L451.0 857.9L452.5 857.8L454.0 858.7L455.5 859.0L457.0 859.2L458.5 858.5L460.0 859.3L461.5 859.3L463.1 858.8L464.6 859.9L466.1 860.1L467.6 859.3L469.1 860.4L470.6 859.8L472.1 860.1L473.6 860.8L475.2 860.7L476.7 860.1L478.2 860.5L479.7 860.8L481.2 860.7L482.7 860.6L484.2 860.9L485.7 861.5L487.3 860.8L488.8 861.6L490.3 861.6L491.8 861.2L493.3 861.7L494.8 862.2L496.3 862.2L497.8 861.8L499.3 863.1L500.9 863.0L502.4 863.3L503.9 862.4L505.4 862.7L506.9 862.6L508.4 863.6L509.9 863.1L511.4 863.1L513.0 863.6L514.5 864.3L516.0 864.3L517.5 863.8L519.0 863.8L520.5 864.9L522.0 864.6L523.5 864.9L525.1 864.3L526.6 864.4L528.1 865.2L529.6 865.1L531.1 864.8L532.6 866.0L534.1 865.7L535.6 866.1L537.1 865.3L538.7 866.4L540.2 865.6L541.7 866.7L543.2 866.3L544.7 866.3L546.2 866.7L547.7 867.3L549.2 866.6L550.8 866.6L552.3 867.2L553.8 867.0L555.3 867.0L556.8 867.2L558.3 867.2L559.8 867.5L561.3 867.7L562.9 867.9L564.4 868.5L565.9 868.1L567.4 868.5L568.9 868.2L570.4 868.6L571.9 868.3L573.4 868.7L575.0 868.6L576.5 869.6L578.0 869.5L579.5 869.2L581.0 869.7L582.5 870.4L584.0 869.5L585.5 870.5L587.0 870.2L588.5 870.4L590.0 870.9L591.5 870.5L593.0 870.8L594.5 871.2L596.0 871.7L597.5 871.0L599.0 871.8L600.5 871.7L602.0 871.8L603.5 871.7L605.0 871.7L606.5 871.5L608.0 871.7L609.5 871.8L611.0 872.8L612.5 872.3L614.0 872.3L615.5 872.4L617.0 873.4L618.5 873.6L620.0 873.5L621.5 873.2L623.0 873.4L624.5 873.6L626.0 874.0L627.5 873.8L629.0 874.3L630.5 874.3L632.1 875.3L633.6 875.5L635.1 875.2L636.6 875.0L638.1 876.0L639.6 875.4L641.1 875.6L642.6 875.4L642.6 909.7L644.0 925.0L646.2 935.3L648.0 919.6L650.6 909.8L652.5 915.1L654.3 921.2L656.5 914.4L658.6 908.2L660.5 911.8L662.3 915.8L664.5 911.3L666.7 906.3L668.5 909.8L670.3 912.7L672.5 909.4L674.7 905.6L676.5 907.1L678.3 908.8L680.5 905.3L682.7 902.3L684.5 904.4L686.4 904.7L688.5 903.0L690.7 900.5L693.6 901.7L695.3 901.2L697.1 899.9L698.8 898.3L701.7 899.9L703.6 899.0L705.6 897.2L707.5 896.7L709.0 896.4L710.5 896.5L712.0 896.1L713.5 895.8L715.0 895.2L716.5 895.3L718.0 894.7L718.4 884.5L718.8 900.0L719.2 893.9L721.1 893.6L723.1 893.3L725.0 892.5L726.6 893.3L728.2 892.8L729.8 892.7L731.4 892.6L733.0 892.5L734.6 892.1L736.2 891.4L737.8 892.2L739.4 892.0L741.0 891.6L741.3 884.3L741.6 896.9L742.0 891.1L743.5 891.7L745.0 890.9L746.5 890.5L748.0 890.5L749.6 890.8L751.1 890.0L752.6 890.4L754.1 890.5L755.6 889.7L757.1 889.5L758.7 889.5L760.2 889.7L761.7 889.7L763.3 889.4L764.8 889.3L766.3 888.6L767.9 888.6L769.4 888.6L771.0 889.1L772.5 888.5L774.0 888.7L775.6 887.9L777.1 887.9L778.6 888.1L780.2 888.5L781.7 888.4L783.2 888.3L784.8 887.7L786.3 887.9L787.8 887.9L789.3 888.0L790.8 887.6L792.4 888.6L793.9 887.8L795.4 888.8L796.9 888.8L798.4 887.8L799.9 888.4L801.5 888.9L803.0 889.1L804.5 888.6L806.0 888.4L807.5 888.4L809.0 889.3L810.6 888.5L812.1 889.0L813.6 888.6L815.1 889.1L816.6 889.6L818.1 888.7L819.7 889.6L821.2 889.3L822.7 889.8L824.2 889.6L825.7 889.2L827.2 890.2L828.8 889.8L830.3 889.4L831.8 889.6L833.3 890.3L834.8 890.4L836.3 890.4L837.9 890.3L839.4 890.7L840.9 890.8L842.4 891.6L843.9 890.8L845.4 891.8L847.0 892.1L848.5 891.3L850.0 892.5L851.5 892.4L853.0 892.7L854.5 892.1L856.1 892.4L857.6 892.6L859.1 893.4L860.6 893.1L862.1 892.9L863.6 893.1L865.1 893.1L866.7 892.9L868.2 893.1L869.7 894.1L871.2 893.6L872.7 894.4L874.2 893.7L875.8 893.9L877.3 894.3L878.8 894.0L880.3 894.3L881.8 895.2L883.3 895.2L884.8 895.2L886.4 895.1L887.9 895.6L889.4 895.7L890.9 895.4L892.4 895.7L893.9 895.0L895.5 895.9L897.0 895.7L898.5 896.2L900.0 896.2L901.5 895.9L903.1 895.7L904.6 896.9L906.1 896.0L907.6 896.5L909.2 896.5L910.7 896.5L912.2 897.2L913.7 897.6L915.3 896.8L916.8 897.4L918.3 897.1L919.8 897.5L921.4 897.5L922.9 897.3L924.4 897.4L925.9 897.6L927.5 898.5L929.0 898.1L930.5 897.9L932.0 898.9L933.6 899.1L935.1 898.5L936.6 898.3L938.1 898.5L939.7 898.4L941.2 898.9L942.7 898.7L944.2 899.0L945.8 899.1L947.3 899.6L948.8 900.1L950.3 900.0L951.9 899.7L953.4 899.8L954.9 900.1L956.4 900.0L958.0 900.1L959.5 899.9L961.0 900.2L962.5 901.2L964.1 900.3L965.6 900.9L967.1 901.1L968.6 901.5L970.2 900.8L971.7 901.0L973.2 901.2L974.7 901.5L976.3 901.8L977.8 902.6L979.3 902.6L980.8 902.9L982.3 902.0L983.8 902.2L985.4 903.2L986.9 903.6L988.4 903.3L989.9 903.6L991.4 903.1L992.9 903.8L994.5 904.6L996.0 904.6L997.5 904.9L999.0 905.2L1000.5 904.5L1002.1 904.5L1003.6 904.8L1005.1 905.4L1006.6 905.8L1008.1 906.3L1009.6 906.2L1011.2 906.3L1012.7 906.6L1014.2 906.4L1015.7 906.7L1017.2 906.3L1018.8 907.4L1020.3 906.9L1021.8 907.9L1023.3 907.7L1024.8 907.5L1026.3 907.5L1027.9 907.8L1029.4 908.5L1030.9 908.7L1032.4 908.2L1033.9 908.3L1035.4 909.1L1037.0 909.3L1038.5 909.3L1040.0 909.3L1040.4 905.1L1040.8 915.4L1041.2 909.4L1042.7 909.8L1044.2 910.6L1045.7 910.4L1047.2 910.9L1048.8 910.6L1050.3 910.5L1051.8 910.7L1053.3 911.8L1054.8 911.7L1056.3 911.4L1057.8 911.3L1059.3 912.0L1060.8 912.5L1062.4 912.4L1063.9 912.4L1065.4 913.1L1066.9 913.6L1068.4 912.9L1069.9 912.9L1071.4 913.5L1072.9 913.8L1074.4 914.3L1076.0 913.9L1077.5 914.8L1079.0 915.0L1080.5 914.9L1082.0 914.7L1083.5 915.9L1085.0 915.3L1086.5 916.1L1088.0 915.6L1089.6 915.8L1091.1 916.6L1092.6 916.3L1094.1 917.3L1095.6 916.9L1097.1 916.7L1098.6 917.0L1100.1 917.4L1101.6 917.9L1103.2 918.5L1104.7 917.7L1106.2 918.2L1107.7 918.2L1109.2 919.3L1110.7 918.5L1112.2 918.7L1113.7 918.9L1115.2 919.5L1116.7 920.4L1118.2 920.6L1119.7 920.6L1121.2 921.2L1122.7 921.3L1124.2 920.8L1125.7 920.9L1127.2 922.0L1128.7 922.0L1130.2 921.3L1131.7 922.3L1133.2 922.2L1134.7 922.4L1136.2 922.6L1137.7 922.6L1139.2 922.7L1140.7 923.2L1142.2 923.5L1143.7 924.5L1145.2 923.7L1146.7 924.9L1148.2 924.3L1149.7 924.7L1151.2 925.4L1152.7 925.7L1154.2 925.4L1155.8 925.2L1157.3 925.9L1158.8 926.0L1160.3 926.9L1161.8 926.3L1163.3 926.7L1164.8 927.6L1166.3 926.8L1167.8 927.4L1169.3 928.1L1170.8 928.3L1172.3 927.7L1173.8 927.9L1175.3 928.1L1176.8 929.4L1178.3 928.8L1179.8 929.6L1181.3 930.0L1182.8 929.6L1184.3 929.7L1185.8 930.8L1187.3 930.6L1188.8 930.4L1190.3 931.2L1191.8 930.9L1193.3 931.1L1194.8 931.0L1196.3 932.1L1197.8 932.5L1199.3 932.4L1200.8 933.0L1202.3 932.3L1203.9 932.9L1205.4 933.5L1206.9 934.4L1208.4 934.8L1210.0 934.4L1211.5 934.6L1213.0 935.2L1214.6 935.6L1216.1 936.4L1217.6 935.9L1219.1 937.0L1220.7 937.2L1222.2 937.7L1223.7 938.0L1225.3 938.1L1226.8 938.1L1228.3 938.5L1229.8 938.9L1231.4 939.7L1232.9 939.2L1234.4 939.7L1236.0 940.7L1237.5 940.4L1239.0 940.6L1240.5 940.9L1242.1 941.8L1243.6 941.9L1245.1 943.0L1246.7 943.3L1248.2 943.7L1249.7 943.2L1251.2 943.3L1252.8 943.7L1254.3 944.5L1255.8 945.1L1257.4 945.1L1258.9 945.2L1260.4 945.8L1261.9 946.4L1263.5 946.8L1265.0 947.2L1266.5 947.7L1268.1 947.8L1269.6 947.5L1271.1 948.7L1272.6 948.4L1274.2 949.1L1275.7 949.2L1277.2 949.9L1278.8 949.6L1280.3 950.0L1281.8 950.3L1283.3 950.5L1284.9 951.6L1286.4 951.6L1287.9 951.5L1289.4 951.9L1291.0 952.9L1292.5 952.6L1294.0 952.6L1295.5 953.6L1297.1 953.7L1298.6 954.4L1300.1 953.6L1301.7 954.4L1303.2 955.1L1304.7 955.4L1306.2 955.8L1307.8 955.0L1309.3 955.6L1310.8 955.7L1312.3 956.1L1313.9 957.3L1315.4 957.1L1316.9 957.8L1318.5 957.4L1320.0 958.3L1321.5 958.1L1323.0 958.2L1324.6 959.1L1326.1 959.6L1327.6 958.9L1329.1 959.8L1330.7 960.1L1332.2 959.9L1333.7 960.4L1335.2 960.4L1336.8 960.8L1338.3 961.1L1339.8 961.6L1341.4 961.8L1342.9 961.4L1344.4 961.2L1346.0 961.7L1347.5 962.3L1349.0 961.8L1350.5 962.0L1352.1 962.0L1353.6 962.8L1355.1 962.6L1356.7 962.2L1358.2 962.3L1359.7 962.8L1361.2 963.1L1362.8 963.3L1364.3 962.7L1365.8 962.9L1367.4 963.7L1368.9 963.4L1370.4 963.4L1372.0 963.5L1373.5 964.4L1375.0 963.7L1376.5 964.1L1378.1 964.0L1379.6 964.2L1381.1 964.8L1382.7 965.1L1384.2 964.4L1385.7 964.3L1387.3 965.0L1388.8 964.4L1390.3 964.2L1391.8 965.3L1393.4 964.7L1394.9 965.3L1396.4 964.8L1397.9 965.4L1399.5 965.0L1401.0 964.6L1402.5 964.5L1404.0 965.2L1405.6 965.3L1407.1 965.7L1408.6 964.7L1410.2 965.4L1411.7 965.2L1413.2 965.4L1414.7 965.0L1416.3 965.2L1417.8 965.5L1419.3 966.0L1420.8 965.1L1422.4 965.6L1423.9 966.0L1425.4 966.2L1426.9 965.4L1428.5 965.3L1430.0 966.3L1431.5 966.4L1433.1 965.9L1434.6 965.4L1436.1 966.5L1437.6 965.9L1439.2 966.5L1440.7 966.2L1442.2 966.5L1443.7 965.8L1445.3 966.5L1446.8 965.9L1448.3 966.2L1449.8 966.7L1451.4 966.8L1452.9 966.0L1454.4 966.0L1455.9 966.2L1457.4 966.3L1458.9 966.1L1460.4 965.8L1461.9 965.9L1463.4 966.5L1464.9 966.6L1466.4 965.6L1467.9 966.2L1469.4 966.4L1470.9 965.5L1472.4 966.4L1473.9 965.5L1475.4 966.1L1477.0 966.0L1478.5 966.1L1480.0 965.6L1481.5 965.7L1483.0 965.9L1484.5 965.7L1486.0 965.9L1487.5 965.7L1489.0 965.6L1490.5 965.1L1492.0 965.8L1493.5 965.6L1495.0 965.3L1496.5 965.9L1498.0 965.9L1499.5 965.4L1501.0 965.1L1502.5 965.4L1504.0 964.9L1505.5 964.9L1507.0 965.3L1508.5 964.8L1510.0 965.2L1511.5 965.3L1513.0 964.7L1514.5 965.4L1516.0 964.7L1517.5 965.4L1519.0 965.4L1520.5 965.1L1522.1 964.5L1523.6 965.0L1525.1 964.8L1526.6 965.5L1528.1 964.5L1529.6 965.3L1531.1 965.5L1532.6 965.1L1534.1 965.2L1535.6 964.4L1537.1 965.3L1538.6 964.7L1540.1 965.2L1541.6 965.2L1543.1 964.2L1544.6 964.9L1546.1 965.0L1547.7 963.8L1549.2 964.1L1550.7 964.4L1552.2 963.6L1553.8 964.3L1555.3 963.5L1556.8 964.0L1558.3 963.1L1559.9 963.4L1561.4 963.8L1562.9 962.8L1564.4 962.7L1566.0 962.9L1567.5 962.5L1569.0 962.1L1570.6 962.1L1572.1 962.0L1573.6 962.8L1575.1 962.4L1576.7 962.5L1578.2 961.5L1579.7 962.1L1581.2 961.2L1582.8 961.6L1584.3 961.6L1585.8 961.1L1587.3 961.6L1588.9 961.1L1590.4 961.0L1591.9 961.3L1593.5 960.2L1595.0 961.2L1596.5 960.6L1598.0 960.2L1599.6 960.6L1601.1 959.8L1602.6 960.5L1604.1 959.9L1605.7 959.5L1607.2 959.9L1608.7 959.4L1610.2 959.0L1611.8 959.5L1613.3 958.6L1614.8 959.4L1616.4 958.6L1617.9 959.0L1619.4 959.3L1620.9 958.7L1622.5 958.7L1624.0 958.2L1625.5 957.7L1627.0 957.6L1628.6 957.7L1630.1 958.1L1631.6 957.8L1633.1 957.8L1634.7 958.1L1636.2 957.1L1637.7 957.1L1639.3 957.5L1640.8 956.7L1642.3 956.6L1643.8 956.9L1645.4 956.5L1646.9 956.7L1648.4 956.4L1649.9 956.7L1651.5 956.7L1653.0 956.1L1654.5 956.5L1656.0 956.2L1657.6 955.7L1659.1 956.6L1660.6 955.6L1662.2 955.4L1663.7 955.2L1665.2 955.8L1666.7 956.0L1668.3 955.8L1669.8 955.2L1671.3 954.9L1672.8 954.5L1674.4 955.2L1675.9 955.0L1677.4 954.6L1678.9 954.9L1680.5 954.5L1682.0 955.0L1683.5 954.7L1685.0 954.0L1686.5 954.7L1688.0 953.6L1689.5 954.1L1691.0 953.9L1692.5 953.6L1694.0 953.3L1695.5 954.1L1697.0 953.1L1698.5 953.7L1700.0 954.1L1701.5 953.0L1703.0 953.0L1704.5 953.4L1706.0 953.2L1707.5 953.3L1709.0 953.4L1710.5 952.6L1712.0 952.7L1713.5 952.6L1715.0 952.2L1716.5 953.1L1718.0 952.9L1719.5 952.7L1721.0 951.8L1722.5 952.7L1724.0 952.5L1725.5 952.1L1727.0 952.4L1728.5 951.9L1730.0 951.6L1731.5 951.4L1733.0 951.4L1734.5 951.1L1736.0 951.4L1737.5 951.8L1739.0 951.7L1740.5 951.8L1742.0 951.5L1743.5 950.9L1745.0 951.2L1746.5 951.0L1748.0 951.3L1749.5 950.9L1751.0 950.5" fill="none" stroke="#7e3896" stroke-width="1.3"/><rect x="3" y="289" width="1748" height="2" fill="#777"/><rect x="3" y="523" width="1748" height="2" fill="#777"/><rect x="3" y="757" width="1748" height="2" fill="#777"/>
</svg>
<div class="tl" style="left:12.8px">0 s</div><div class="tl" style="left:187.6px">3 ms</div><div class="tl" style="left:362.4px">6 ms</div><div class="tl" style="left:537.2px">9 ms</div><div class="tl" style="left:712.0px">12 ms</div><div class="tl" style="left:886.8px">15 ms</div><div class="tl" style="left:1061.6px">18 ms</div><div class="tl" style="left:1236.4px">21 ms</div><div class="tl" style="left:1411.2px">24 ms</div><div class="tl" style="left:1586.0px">27 ms</div>
</div>

<svg width="40" height="30" style="left:4px;top:158px"><path d="M6 2.75 H26 Q28 2.75 29 4 L37.25 15.0 L29 26 Q28 27.25 26 27.25 H6 Q2.75 27.25 2.75 24 V6 Q2.75 2.75 6 2.75Z" fill="#14140a" stroke="#eee11e" stroke-width="1.5"/><text x="11" y="19.2" font-family="Liberation Sans" font-size="11.5" fill="#eee11e" xml:space="preserve">C 1</text></svg>
<div class="abs" style="left:53px;top:160px;font-size:19px;letter-spacing:0.5px;color:#eee11e;line-height:24px">U_loop,coil</div>
<svg width="40" height="30" style="left:4px;top:392px"><path d="M6 2.75 H26 Q28 2.75 29 4 L37.25 15.0 L29 26 Q28 27.25 26 27.25 H6 Q2.75 27.25 2.75 24 V6 Q2.75 2.75 6 2.75Z" fill="#111808" stroke="#8cc43c" stroke-width="1.5"/><text x="11" y="19.2" font-family="Liberation Sans" font-size="11.5" fill="#8cc43c" xml:space="preserve">C 4</text></svg>
<div class="abs" style="left:53px;top:394px;font-size:19px;letter-spacing:0.5px;color:#8cc43c;line-height:24px">U_Photod</div>
<svg width="40" height="30" style="left:4px;top:719px"><path d="M6 2.75 H26 Q28 2.75 29 4 L37.25 15.0 L29 26 Q28 27.25 26 27.25 H6 Q2.75 27.25 2.75 24 V6 Q2.75 2.75 6 2.75Z" fill="#1e1408" stroke="#f0901e" stroke-width="1.5"/><text x="8" y="19.2" font-family="Liberation Sans" font-size="11.5" fill="#f0901e" xml:space="preserve">M 1</text></svg>
<div class="abs" style="left:53px;top:721px;font-size:19px;letter-spacing:0.5px;color:#f0901e;line-height:24px">B_t</div>
<svg width="39" height="28" style="left:4.5px;top:810px"><path d="M6 2.75 H25 Q27 2.75 28 4 L36.25 14.0 L28 24 Q27 25.25 25 25.25 H6 Q2.75 25.25 2.75 22 V6 Q2.75 2.75 6 2.75Z" fill="#7b2f96" stroke="#7b2f96" stroke-width="1.5"/><text x="8.5" y="18.2" font-family="Liberation Sans" font-size="12.5" fill="#f4f4f4" xml:space="preserve">M 2</text></svg>
<svg width="60" height="50" style="left:30px;top:55px">
 <path d="M14.8 2H35.2L25 11.3Z" fill="#f39423"/>
 <rect x="15.9" y="12.9" width="18.2" height="19.1" fill="#000" stroke="#f39423" stroke-width="2.2"/>
 <path d="M21.3 32L25 39.4L28.7 32Z" fill="#f39423"/>
 <path d="M20.7 18.3H29.6M25.2 18.3V28" stroke="#f39423" stroke-width="2.3"/>
</svg>
<svg width="40" height="40" style="left:1708px;top:62px">
 <path d="M3 2.5h30.5q2 0 2 2v31z" fill="#555"/>
 <circle cx="29" cy="8.5" r="3.8" fill="none" stroke="#aaa" stroke-width="1.6"/>
 <path d="M26.5 11.5l-6.5 6" stroke="#aaa" stroke-width="2.2" stroke-linecap="round"/>
</svg>
<div class="abs" style="left:1759.9px;top:501px;width:4.2px;height:4.2px;border-radius:50%;background:#c4c4c4"></div>
<div class="abs" style="left:1759.9px;top:509.6px;width:4.2px;height:4.2px;border-radius:50%;background:#c4c4c4"></div>
<div class="abs" style="left:1759.9px;top:518.2px;width:4.2px;height:4.2px;border-radius:50%;background:#c4c4c4"></div>

<!-- right panel -->
<div class="abs" style="left:1769px;top:29px;width:160px;height:966px;border:1px solid #58544f;border-right:none"></div>
<div class="abs" style="left:1785px;top:-1px;font-size:30px;font-weight:bold;color:#fff;letter-spacing:-1.67px;line-height:32px;-webkit-text-stroke:0.6px #fff">Tektronix</div>
<svg width="40" height="30" style="left:1800px;top:0"><path d="M15 25.6H19.6L31 9H26.4Z" fill="#1ec8e8"/></svg>
<div class="abs" style="left:1770px;top:29px;width:150px;text-align:center;font-size:15px;font-weight:bold;color:#e8e8e8;line-height:20px">Add New...</div>
<div class="btn" style="left:1777px;top:54px">Cursors</div>
<div class="btn" style="left:1849px;top:54px">Callout</div>
<div class="btn" style="left:1777px;top:100px">Measure</div>
<div class="btn" style="left:1849px;top:100px">Search</div>
<div class="btn" style="left:1777px;top:146px">Results<br>Table</div>
<div class="btn" style="left:1849px;top:146px">Plot</div>
<div class="abs" style="left:1773px;top:189px;width:144px;height:1px;background:#5c5650"></div>
<div class="btn" style="left:1777px;top:196px"><svg width="30" height="30" style="position:relative">
 <rect x="6" y="5" width="18" height="16" fill="none" stroke="#aaa" stroke-width="1.6" stroke-dasharray="2 2"/>
 <circle cx="16.5" cy="11" r="4" fill="none" stroke="#aaa" stroke-width="1.6"/>
 <path d="M13.5 14l-5 4.5" stroke="#aaa" stroke-width="2" stroke-linecap="round"/>
 <path d="M20 17l6 3.5l-2.5 0.8l2 3l-1.2 0.8l-2-3l-1.8 1.8z" fill="#aaa"/>
</svg></div>
<div class="btn" style="left:1849px;top:196px">More...</div>
<div class="abs" style="left:1773px;top:241px;width:144px;height:1px;background:#5c5650"></div>

<!-- bottom bar -->
<div class="cbox" style="left:3px;background:#c9c9c9"><div class="h" style="background:#4b4623;color:#eee11e">Ch 1</div><div class="b" style="color:#111"><div>5 V/div</div><div>1 M&Omega;</div><div>200 kHz</div></div><div class="bw" style="color:#111">B<sub style="font-size:9px;vertical-align:-2px">w</sub></div></div><div class="cbox" style="left:98px;background:#8a8a8a"><div class="h" style="background:#237f86;color:#1c1c1c">Ch 2</div><div class="b" style="color:#222"><div>250 mV/div</div><div>1 M&Omega;</div><div>200 kHz</div></div><div class="bw" style="color:#222">B<sub style="font-size:9px;vertical-align:-2px">w</sub></div></div><div class="cbox" style="left:193px;background:#8a8a8a"><div class="h" style="background:#8c3a47;color:#c9a4aa">Ch 3</div><div class="b" style="color:#222"><div>450 mV/div</div><div>1 M&Omega;</div><div>200 kHz</div></div><div class="bw" style="color:#222">B<sub style="font-size:9px;vertical-align:-2px">w</sub></div></div><div class="cbox" style="left:288px;background:#c9c9c9"><div class="h" style="background:#304322;color:#8cc43c">Ch 4</div><div class="b" style="color:#111"><div>200 mV/div</div><div>1 M&Omega;</div><div>200 kHz</div></div><div class="bw" style="color:#111">B<sub style="font-size:9px;vertical-align:-2px">w</sub></div></div><div class="cbox" style="left:383px;background:#c9c9c9"><div class="h" style="background:#4a321d;color:#f0901e">Math 1</div><div class="b" style="color:#111"><div>66.2006 ...</div><div>Intg(ch2)...</div></div></div><div class="cbox" style="left:478px;background:#c9c9c9"><div class="h" style="background:#6d2a8c;color:#f4f4f4">Math 2</div><div class="b" style="color:#111"><div>75.2907 ...</div><div>-intg(ch3...</div></div></div>
<div class="vbtn" style="left:1022px"><div class="bar" style="background:#f39423"></div><div class="abs" style="left:0;width:38px;top:30px;font-size:20px;line-height:24px">5</div></div>
<div class="vbtn" style="left:1067px"><div class="bar" style="background:#2b2bd0"></div><div class="abs" style="left:0;width:38px;top:30px;font-size:20px;line-height:24px">6</div></div>
<div class="abs" style="left:1117px;top:999px;width:1px;height:78px;background:#5c5650"></div>
<div class="vbtn" style="left:1128px"><div class="bar" style="background:#b0202a"></div><div class="abs" style="left:0;width:38px;top:19.5px;font-size:15px;line-height:16px">Add<br>New<br>Math</div></div>
<div class="vbtn" style="left:1173px"><div class="bar" style="background:#c8c8d8"></div><div class="abs" style="left:0;width:38px;top:19.5px;font-size:15px;line-height:16px">Add<br>New<br>Ref</div></div>
<div class="vbtn" style="left:1218px"><div class="bar" style="background:#b050e0"></div><div class="abs" style="left:0;width:38px;top:19.5px;font-size:15px;line-height:16px">Add<br>New<br>Bus</div></div>
<div class="abs" style="left:1268px;top:999px;width:1px;height:78px;background:#5c5650"></div>

<div class="sbox" style="left:1279px;width:200px"><div class="h">Horizontal</div>
 <div class="r" style="left:6px;top:20px">3 ms/div</div><div class="r" style="left:112px;top:20px">30 ms</div>
 <div class="r" style="left:6px;top:39px">SR: 1 MS/s</div><div class="r" style="left:112px;top:39px">1 &micro;s/pt</div>
 <div class="r" style="left:6px;top:58px">RL: 30 kpts</div><div class="r" style="left:126px;top:58px">3%</div>
 <svg width="12" height="16" style="left:112px;top:61px"><rect x="1.5" y="1.5" width="8" height="8.5" fill="#000" stroke="#f39423" stroke-width="1.8"/><path d="M3.2 10.5l2.3 3l2.3-3z" fill="#f39423"/><path d="M3.5 4h4M5.5 4v4.5" stroke="#f0f0f0" stroke-width="1.5"/></svg>
</div>
<div class="sbox" style="left:1484px;width:160px"><div class="h">Trigger</div>
 <div class="abs" style="left:6px;top:23px;width:30px;height:16px;border-radius:5px;background:#2424c0;border:1px solid #111;color:#fff;font-size:15px;line-height:13px;text-align:center">6</div>
 <svg width="20" height="16" style="left:45px;top:23px"><path d="M1 14h3.5l7.5-11h4.5" fill="none" stroke="#5050a8" stroke-width="1.1"/></svg>
 <div class="r" style="left:72px;top:20px">3 V</div>
</div>
<div class="sbox" style="left:1649px;width:150px"><div class="h">Acquisition</div>
 <div class="r" style="left:6px;top:20px">Manual,</div><div class="r" style="left:87px;top:20px">Analyze</div>
 <div class="r" style="left:6px;top:39px">High Res: 16 bits</div>
 <div class="r" style="left:6px;top:58px">Single: 0 /1</div>
</div>
<div class="abs" style="left:1811px;top:999px;width:1px;height:78px;background:#5c5650"></div>
<div class="abs" style="left:1822px;top:998px;width:90px;height:36px;border-radius:6px;background:#fe1e28;border:1px solid #777;color:#fff;font-weight:bold;font-size:13.5px;text-align:center;line-height:32px">Preview</div>
<div class="abs" style="left:1822px;top:1042px;width:90px;height:36px;border-radius:6px;background:#c9c9c9;color:#111;font-size:15px;text-align:center;line-height:17px;padding-top:1px">09 Dec 2024<br>7:42:19 PM</div>
</body></html>
